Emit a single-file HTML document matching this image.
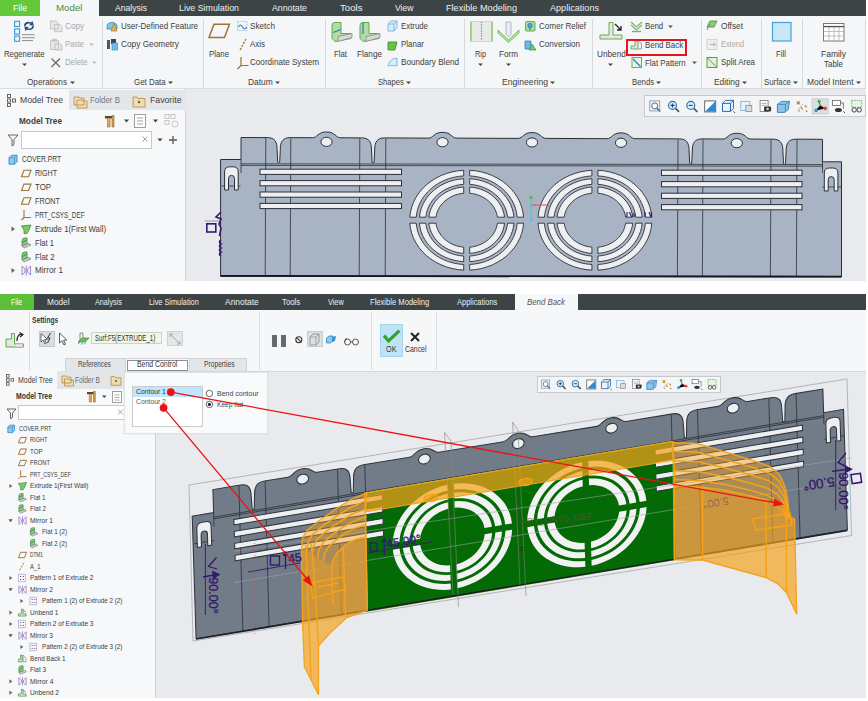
<!DOCTYPE html><html><head><meta charset="utf-8"><style>html,body{margin:0;padding:0;background:#fff;width:868px;height:701px;overflow:hidden;}body{position:relative;font-family:"Liberation Sans",sans-serif;}</style></head><body><div style="position:absolute;left:0px;top:0px;width:866px;height:16px;background:#3c4446;z-index:1;"></div>
<div style="position:absolute;left:0px;top:0px;width:40px;height:16px;background:#62c93b;z-index:2;"></div>
<div style="position:absolute;left:40px;top:0px;width:59px;height:16px;background:#f4f6f7;z-index:2;"></div>
<div style="position:absolute;left:13.00px;top:2.60px;height:10.80px;line-height:10.80px;font-size:9px;color:#ffffff;font-weight:normal;font-style:normal;white-space:pre;transform:scaleX(0.964);transform-origin:0 0;z-index:5">File</div>
<div style="position:absolute;left:56.00px;top:2.24px;height:11.52px;line-height:11.52px;font-size:9.6px;color:#4a8a46;font-weight:normal;font-style:normal;white-space:pre;transform:scaleX(1.014);transform-origin:0 0;z-index:5">Model</div>
<div style="position:absolute;left:115.00px;top:2.36px;height:11.28px;line-height:11.28px;font-size:9.4px;color:#eef0f0;font-weight:normal;font-style:normal;white-space:pre;transform:scaleX(0.916);transform-origin:0 0;z-index:5">Analysis</div>
<div style="position:absolute;left:179.00px;top:2.36px;height:11.28px;line-height:11.28px;font-size:9.4px;color:#eef0f0;font-weight:normal;font-style:normal;white-space:pre;transform:scaleX(0.944);transform-origin:0 0;z-index:5">Live Simulation</div>
<div style="position:absolute;left:272.00px;top:2.36px;height:11.28px;line-height:11.28px;font-size:9.4px;color:#eef0f0;font-weight:normal;font-style:normal;white-space:pre;transform:scaleX(0.932);transform-origin:0 0;z-index:5">Annotate</div>
<div style="position:absolute;left:340.00px;top:2.36px;height:11.28px;line-height:11.28px;font-size:9.4px;color:#eef0f0;font-weight:normal;font-style:normal;white-space:pre;transform:scaleX(1.028);transform-origin:0 0;z-index:5">Tools</div>
<div style="position:absolute;left:395.00px;top:2.36px;height:11.28px;line-height:11.28px;font-size:9.4px;color:#eef0f0;font-weight:normal;font-style:normal;white-space:pre;transform:scaleX(0.918);transform-origin:0 0;z-index:5">View</div>
<div style="position:absolute;left:446.00px;top:2.36px;height:11.28px;line-height:11.28px;font-size:9.4px;color:#eef0f0;font-weight:normal;font-style:normal;white-space:pre;transform:scaleX(0.973);transform-origin:0 0;z-index:5">Flexible Modeling</div>
<div style="position:absolute;left:550.00px;top:2.36px;height:11.28px;line-height:11.28px;font-size:9.4px;color:#eef0f0;font-weight:normal;font-style:normal;white-space:pre;transform:scaleX(0.969);transform-origin:0 0;z-index:5">Applications</div>
<div style="position:absolute;left:0px;top:16px;width:866px;height:73px;background:#f4f6f7;z-index:1;"></div>
<div style="position:absolute;left:0px;top:88px;width:866px;height:1px;background:#d9dde0;z-index:2;"></div>
<div style="position:absolute;left:102px;top:19px;width:1px;height:69px;background:#d6dadd;z-index:2;"></div>
<div style="position:absolute;left:203px;top:19px;width:1px;height:69px;background:#d6dadd;z-index:2;"></div>
<div style="position:absolute;left:324.5px;top:19px;width:1px;height:69px;background:#d6dadd;z-index:2;"></div>
<div style="position:absolute;left:464px;top:19px;width:1px;height:69px;background:#d6dadd;z-index:2;"></div>
<div style="position:absolute;left:591.5px;top:19px;width:1px;height:69px;background:#d6dadd;z-index:2;"></div>
<div style="position:absolute;left:701px;top:19px;width:1px;height:69px;background:#d6dadd;z-index:2;"></div>
<div style="position:absolute;left:761px;top:19px;width:1px;height:69px;background:#d6dadd;z-index:2;"></div>
<div style="position:absolute;left:802px;top:19px;width:1px;height:69px;background:#d6dadd;z-index:2;"></div>
<div style="position:absolute;left:865px;top:19px;width:1px;height:69px;background:#d6dadd;z-index:2;"></div>
<div style="position:absolute;left:4.40px;top:49.38px;height:10.44px;line-height:10.44px;font-size:8.7px;color:#3e3e3e;font-weight:normal;font-style:normal;white-space:pre;transform:scaleX(0.894);transform-origin:0 0;z-index:5">Regenerate</div>
<div style="position:absolute;left:64.60px;top:20.78px;height:10.44px;line-height:10.44px;font-size:8.7px;color:#a9a9a9;font-weight:normal;font-style:normal;white-space:pre;transform:scaleX(0.942);transform-origin:0 0;z-index:5">Copy</div>
<div style="position:absolute;left:65.00px;top:39.18px;height:10.44px;line-height:10.44px;font-size:8.7px;color:#a9a9a9;font-weight:normal;font-style:normal;white-space:pre;transform:scaleX(0.855);transform-origin:0 0;z-index:5">Paste</div>
<div style="position:absolute;left:65.00px;top:57.28px;height:10.44px;line-height:10.44px;font-size:8.7px;color:#a9a9a9;font-weight:normal;font-style:normal;white-space:pre;transform:scaleX(0.896);transform-origin:0 0;z-index:5">Delete</div>
<div style="position:absolute;left:27.20px;top:76.78px;height:10.44px;line-height:10.44px;font-size:8.7px;color:#3e3e3e;font-weight:normal;font-style:normal;white-space:pre;transform:scaleX(0.941);transform-origin:0 0;z-index:5">Operations</div>
<div style="position:absolute;left:121.00px;top:20.78px;height:10.44px;line-height:10.44px;font-size:8.7px;color:#3e3e3e;font-weight:normal;font-style:normal;white-space:pre;transform:scaleX(0.922);transform-origin:0 0;z-index:5">User-Defined Feature</div>
<div style="position:absolute;left:121.00px;top:39.28px;height:10.44px;line-height:10.44px;font-size:8.7px;color:#3e3e3e;font-weight:normal;font-style:normal;white-space:pre;transform:scaleX(0.953);transform-origin:0 0;z-index:5">Copy Geometry</div>
<div style="position:absolute;left:133.70px;top:76.78px;height:10.44px;line-height:10.44px;font-size:8.7px;color:#3e3e3e;font-weight:normal;font-style:normal;white-space:pre;transform:scaleX(0.911);transform-origin:0 0;z-index:5">Get Data</div>
<div style="position:absolute;left:209.00px;top:49.38px;height:10.44px;line-height:10.44px;font-size:8.7px;color:#3e3e3e;font-weight:normal;font-style:normal;white-space:pre;transform:scaleX(0.900);transform-origin:0 0;z-index:5">Plane</div>
<div style="position:absolute;left:250.00px;top:20.78px;height:10.44px;line-height:10.44px;font-size:8.7px;color:#3e3e3e;font-weight:normal;font-style:normal;white-space:pre;transform:scaleX(0.941);transform-origin:0 0;z-index:5">Sketch</div>
<div style="position:absolute;left:250.00px;top:39.28px;height:10.44px;line-height:10.44px;font-size:8.7px;color:#3e3e3e;font-weight:normal;font-style:normal;white-space:pre;transform:scaleX(0.913);transform-origin:0 0;z-index:5">Axis</div>
<div style="position:absolute;left:250.00px;top:57.28px;height:10.44px;line-height:10.44px;font-size:8.7px;color:#3e3e3e;font-weight:normal;font-style:normal;white-space:pre;transform:scaleX(0.934);transform-origin:0 0;z-index:5">Coordinate System</div>
<div style="position:absolute;left:248.30px;top:76.78px;height:10.44px;line-height:10.44px;font-size:8.7px;color:#3e3e3e;font-weight:normal;font-style:normal;white-space:pre;transform:scaleX(0.969);transform-origin:0 0;z-index:5">Datum</div>
<div style="position:absolute;left:334.00px;top:49.38px;height:10.44px;line-height:10.44px;font-size:8.7px;color:#3e3e3e;font-weight:normal;font-style:normal;white-space:pre;transform:scaleX(0.898);transform-origin:0 0;z-index:5">Flat</div>
<div style="position:absolute;left:357.00px;top:49.38px;height:10.44px;line-height:10.44px;font-size:8.7px;color:#3e3e3e;font-weight:normal;font-style:normal;white-space:pre;transform:scaleX(0.941);transform-origin:0 0;z-index:5">Flange</div>
<div style="position:absolute;left:401.00px;top:20.78px;height:10.44px;line-height:10.44px;font-size:8.7px;color:#3e3e3e;font-weight:normal;font-style:normal;white-space:pre;transform:scaleX(0.901);transform-origin:0 0;z-index:5">Extrude</div>
<div style="position:absolute;left:401.00px;top:39.28px;height:10.44px;line-height:10.44px;font-size:8.7px;color:#3e3e3e;font-weight:normal;font-style:normal;white-space:pre;transform:scaleX(0.915);transform-origin:0 0;z-index:5">Planar</div>
<div style="position:absolute;left:401.00px;top:57.28px;height:10.44px;line-height:10.44px;font-size:8.7px;color:#3e3e3e;font-weight:normal;font-style:normal;white-space:pre;transform:scaleX(0.938);transform-origin:0 0;z-index:5">Boundary Blend</div>
<div style="position:absolute;left:378.00px;top:76.78px;height:10.44px;line-height:10.44px;font-size:8.7px;color:#3e3e3e;font-weight:normal;font-style:normal;white-space:pre;transform:scaleX(0.876);transform-origin:0 0;z-index:5">Shapes</div>
<div style="position:absolute;left:475.00px;top:49.38px;height:10.44px;line-height:10.44px;font-size:8.7px;color:#3e3e3e;font-weight:normal;font-style:normal;white-space:pre;transform:scaleX(0.843);transform-origin:0 0;z-index:5">Rip</div>
<div style="position:absolute;left:499.00px;top:49.38px;height:10.44px;line-height:10.44px;font-size:8.7px;color:#3e3e3e;font-weight:normal;font-style:normal;white-space:pre;transform:scaleX(0.937);transform-origin:0 0;z-index:5">Form</div>
<div style="position:absolute;left:539.00px;top:20.78px;height:10.44px;line-height:10.44px;font-size:8.7px;color:#3e3e3e;font-weight:normal;font-style:normal;white-space:pre;transform:scaleX(0.918);transform-origin:0 0;z-index:5">Corner Relief</div>
<div style="position:absolute;left:539.00px;top:39.28px;height:10.44px;line-height:10.44px;font-size:8.7px;color:#3e3e3e;font-weight:normal;font-style:normal;white-space:pre;transform:scaleX(0.933);transform-origin:0 0;z-index:5">Conversion</div>
<div style="position:absolute;left:501.50px;top:76.78px;height:10.44px;line-height:10.44px;font-size:8.7px;color:#3e3e3e;font-weight:normal;font-style:normal;white-space:pre;transform:scaleX(0.992);transform-origin:0 0;z-index:5">Engineering</div>
<div style="position:absolute;left:596.60px;top:49.38px;height:10.44px;line-height:10.44px;font-size:8.7px;color:#3e3e3e;font-weight:normal;font-style:normal;white-space:pre;transform:scaleX(0.949);transform-origin:0 0;z-index:5">Unbend</div>
<div style="position:absolute;left:645.10px;top:20.78px;height:10.44px;line-height:10.44px;font-size:8.7px;color:#3e3e3e;font-weight:normal;font-style:normal;white-space:pre;transform:scaleX(0.897);transform-origin:0 0;z-index:5">Bend</div>
<div style="position:absolute;left:645.10px;top:39.78px;height:10.44px;line-height:10.44px;font-size:8.7px;color:#3e3e3e;font-weight:normal;font-style:normal;white-space:pre;transform:scaleX(0.906);transform-origin:0 0;z-index:5">Bend Back</div>
<div style="position:absolute;left:645.10px;top:57.58px;height:10.44px;line-height:10.44px;font-size:8.7px;color:#3e3e3e;font-weight:normal;font-style:normal;white-space:pre;transform:scaleX(0.904);transform-origin:0 0;z-index:5">Flat Pattern</div>
<div style="position:absolute;left:631.80px;top:76.78px;height:10.44px;line-height:10.44px;font-size:8.7px;color:#3e3e3e;font-weight:normal;font-style:normal;white-space:pre;transform:scaleX(0.901);transform-origin:0 0;z-index:5">Bends</div>
<div style="position:absolute;left:721.00px;top:20.78px;height:10.44px;line-height:10.44px;font-size:8.7px;color:#3e3e3e;font-weight:normal;font-style:normal;white-space:pre;transform:scaleX(0.955);transform-origin:0 0;z-index:5">Offset</div>
<div style="position:absolute;left:721.00px;top:39.28px;height:10.44px;line-height:10.44px;font-size:8.7px;color:#a9a9a9;font-weight:normal;font-style:normal;white-space:pre;transform:scaleX(0.850);transform-origin:0 0;z-index:5">Extend</div>
<div style="position:absolute;left:721.00px;top:57.28px;height:10.44px;line-height:10.44px;font-size:8.7px;color:#3e3e3e;font-weight:normal;font-style:normal;white-space:pre;transform:scaleX(0.914);transform-origin:0 0;z-index:5">Split Area</div>
<div style="position:absolute;left:714.20px;top:76.78px;height:10.44px;line-height:10.44px;font-size:8.7px;color:#3e3e3e;font-weight:normal;font-style:normal;white-space:pre;transform:scaleX(0.963);transform-origin:0 0;z-index:5">Editing</div>
<div style="position:absolute;left:776.00px;top:49.38px;height:10.44px;line-height:10.44px;font-size:8.7px;color:#3e3e3e;font-weight:normal;font-style:normal;white-space:pre;transform:scaleX(0.900);transform-origin:0 0;z-index:5">Fill</div>
<div style="position:absolute;left:764.20px;top:76.78px;height:10.44px;line-height:10.44px;font-size:8.7px;color:#3e3e3e;font-weight:normal;font-style:normal;white-space:pre;transform:scaleX(0.898);transform-origin:0 0;z-index:5">Surface</div>
<div style="position:absolute;left:821.00px;top:49.38px;height:10.44px;line-height:10.44px;font-size:8.7px;color:#3e3e3e;font-weight:normal;font-style:normal;white-space:pre;transform:scaleX(0.977);transform-origin:0 0;z-index:5">Family</div>
<div style="position:absolute;left:824.00px;top:59.28px;height:10.44px;line-height:10.44px;font-size:8.7px;color:#3e3e3e;font-weight:normal;font-style:normal;white-space:pre;transform:scaleX(0.914);transform-origin:0 0;z-index:5">Table</div>
<div style="position:absolute;left:806.50px;top:76.78px;height:10.44px;line-height:10.44px;font-size:8.7px;color:#3e3e3e;font-weight:normal;font-style:normal;white-space:pre;transform:scaleX(0.973);transform-origin:0 0;z-index:5">Model Intent</div>
<svg style="position:absolute;left:22.2px;top:61.5px;z-index:4;overflow:visible;" width="5.0" height="5.0" viewBox="0 0 5.0 5.0"><path d="M0 1.5 L5.0 1.5 L2.5 4.0 Z" fill="#444"/></svg>
<svg style="position:absolute;left:88.5px;top:41.9px;z-index:4;overflow:visible;" width="5.0" height="5.0" viewBox="0 0 5.0 5.0"><path d="M0 1.5 L5.0 1.5 L2.5 4.0 Z" fill="#bbb"/></svg>
<svg style="position:absolute;left:91.9px;top:60.0px;z-index:4;overflow:visible;" width="5.0" height="5.0" viewBox="0 0 5.0 5.0"><path d="M0 1.5 L5.0 1.5 L2.5 4.0 Z" fill="#bbb"/></svg>
<svg style="position:absolute;left:69.5px;top:79.5px;z-index:4;overflow:visible;" width="5.0" height="5.0" viewBox="0 0 5.0 5.0"><path d="M0 1.5 L5.0 1.5 L2.5 4.0 Z" fill="#444"/></svg>
<svg style="position:absolute;left:167.5px;top:79.5px;z-index:4;overflow:visible;" width="5.0" height="5.0" viewBox="0 0 5.0 5.0"><path d="M0 1.5 L5.0 1.5 L2.5 4.0 Z" fill="#444"/></svg>
<svg style="position:absolute;left:274.5px;top:79.5px;z-index:4;overflow:visible;" width="5.0" height="5.0" viewBox="0 0 5.0 5.0"><path d="M0 1.5 L5.0 1.5 L2.5 4.0 Z" fill="#444"/></svg>
<svg style="position:absolute;left:405.5px;top:79.5px;z-index:4;overflow:visible;" width="5.0" height="5.0" viewBox="0 0 5.0 5.0"><path d="M0 1.5 L5.0 1.5 L2.5 4.0 Z" fill="#444"/></svg>
<svg style="position:absolute;left:478.0px;top:61.5px;z-index:4;overflow:visible;" width="5.0" height="5.0" viewBox="0 0 5.0 5.0"><path d="M0 1.5 L5.0 1.5 L2.5 4.0 Z" fill="#444"/></svg>
<svg style="position:absolute;left:506.0px;top:61.5px;z-index:4;overflow:visible;" width="5.0" height="5.0" viewBox="0 0 5.0 5.0"><path d="M0 1.5 L5.0 1.5 L2.5 4.0 Z" fill="#444"/></svg>
<svg style="position:absolute;left:549.5px;top:79.5px;z-index:4;overflow:visible;" width="5.0" height="5.0" viewBox="0 0 5.0 5.0"><path d="M0 1.5 L5.0 1.5 L2.5 4.0 Z" fill="#444"/></svg>
<svg style="position:absolute;left:608.0px;top:61.5px;z-index:4;overflow:visible;" width="5.0" height="5.0" viewBox="0 0 5.0 5.0"><path d="M0 1.5 L5.0 1.5 L2.5 4.0 Z" fill="#444"/></svg>
<svg style="position:absolute;left:668.4px;top:23.5px;z-index:4;overflow:visible;" width="5.0" height="5.0" viewBox="0 0 5.0 5.0"><path d="M0 1.5 L5.0 1.5 L2.5 4.0 Z" fill="#555"/></svg>
<svg style="position:absolute;left:691.5px;top:60.3px;z-index:4;overflow:visible;" width="5.0" height="5.0" viewBox="0 0 5.0 5.0"><path d="M0 1.5 L5.0 1.5 L2.5 4.0 Z" fill="#555"/></svg>
<svg style="position:absolute;left:655.9px;top:79.5px;z-index:4;overflow:visible;" width="5.0" height="5.0" viewBox="0 0 5.0 5.0"><path d="M0 1.5 L5.0 1.5 L2.5 4.0 Z" fill="#444"/></svg>
<svg style="position:absolute;left:741.5px;top:79.5px;z-index:4;overflow:visible;" width="5.0" height="5.0" viewBox="0 0 5.0 5.0"><path d="M0 1.5 L5.0 1.5 L2.5 4.0 Z" fill="#444"/></svg>
<svg style="position:absolute;left:792.5px;top:79.5px;z-index:4;overflow:visible;" width="5.0" height="5.0" viewBox="0 0 5.0 5.0"><path d="M0 1.5 L5.0 1.5 L2.5 4.0 Z" fill="#444"/></svg>
<svg style="position:absolute;left:855.5px;top:79.5px;z-index:4;overflow:visible;" width="5.0" height="5.0" viewBox="0 0 5.0 5.0"><path d="M0 1.5 L5.0 1.5 L2.5 4.0 Z" fill="#444"/></svg>
<div style="position:absolute;left:626px;top:39px;width:61px;height:17px;background:transparent;z-index:6;box-sizing:border-box;border:2px solid #e8141c;"></div>
<div style="position:absolute;left:0px;top:89px;width:866px;height:192px;background:#e9eaed;z-index:1;"></div>
<div style="position:absolute;left:0px;top:89px;width:186px;height:192px;background:#f6f8f9;z-index:2;"></div>
<div style="position:absolute;left:185px;top:89px;width:1px;height:192px;background:#d0d5d8;z-index:2;"></div>
<div style="position:absolute;left:0px;top:90px;width:186px;height:20px;background:#e4e7ea;z-index:2;"></div>
<div style="position:absolute;left:0px;top:90px;width:69px;height:20px;background:#f6f8f9;z-index:3;"></div>
<div style="position:absolute;left:19.50px;top:95.28px;height:10.44px;line-height:10.44px;font-size:8.7px;color:#3e3e3e;font-weight:normal;font-style:normal;white-space:pre;transform:scaleX(0.989);transform-origin:0 0;z-index:5">Model Tree</div>
<div style="position:absolute;left:90.00px;top:95.28px;height:10.44px;line-height:10.44px;font-size:8.7px;color:#777;font-weight:normal;font-style:normal;white-space:pre;transform:scaleX(0.913);transform-origin:0 0;z-index:5">Folder B</div>
<div style="position:absolute;left:149.50px;top:95.28px;height:10.44px;line-height:10.44px;font-size:8.7px;color:#3e3e3e;font-weight:normal;font-style:normal;white-space:pre;transform:scaleX(1.003);transform-origin:0 0;z-index:5">Favorite</div>
<div style="position:absolute;left:19.00px;top:115.78px;height:10.44px;line-height:10.44px;font-size:8.7px;color:#3e3e3e;font-weight:bold;font-style:normal;white-space:pre;transform:scaleX(0.947);transform-origin:0 0;z-index:5">Model Tree</div>
<div style="position:absolute;left:21px;top:131px;width:131px;height:18px;background:#ffffff;z-index:3;box-sizing:border-box;border:1px solid #c5cacd;"></div>
<div style="position:absolute;left:22.00px;top:154.48px;height:10.44px;line-height:10.44px;font-size:8.7px;color:#3e3e3e;font-weight:normal;font-style:normal;white-space:pre;transform:scaleX(0.772);transform-origin:0 0;z-index:5">COVER.PRT</div>
<div style="position:absolute;left:35.00px;top:168.28px;height:10.44px;line-height:10.44px;font-size:8.7px;color:#3e3e3e;font-weight:normal;font-style:normal;white-space:pre;transform:scaleX(0.814);transform-origin:0 0;z-index:5">RIGHT</div>
<div style="position:absolute;left:35.00px;top:182.08px;height:10.44px;line-height:10.44px;font-size:8.7px;color:#3e3e3e;font-weight:normal;font-style:normal;white-space:pre;transform:scaleX(0.904);transform-origin:0 0;z-index:5">TOP</div>
<div style="position:absolute;left:35.00px;top:195.78px;height:10.44px;line-height:10.44px;font-size:8.7px;color:#3e3e3e;font-weight:normal;font-style:normal;white-space:pre;transform:scaleX(0.836);transform-origin:0 0;z-index:5">FRONT</div>
<div style="position:absolute;left:35.00px;top:209.78px;height:10.44px;line-height:10.44px;font-size:8.7px;color:#3e3e3e;font-weight:normal;font-style:normal;white-space:pre;transform:scaleX(0.729);transform-origin:0 0;z-index:5">PRT_CSYS_DEF</div>
<div style="position:absolute;left:35.00px;top:223.78px;height:10.44px;line-height:10.44px;font-size:8.7px;color:#3e3e3e;font-weight:normal;font-style:normal;white-space:pre;transform:scaleX(0.901);transform-origin:0 0;z-index:5">Extrude 1(First Wall)</div>
<div style="position:absolute;left:35.00px;top:237.78px;height:10.44px;line-height:10.44px;font-size:8.7px;color:#3e3e3e;font-weight:normal;font-style:normal;white-space:pre;transform:scaleX(0.874);transform-origin:0 0;z-index:5">Flat 1</div>
<div style="position:absolute;left:35.00px;top:251.78px;height:10.44px;line-height:10.44px;font-size:8.7px;color:#3e3e3e;font-weight:normal;font-style:normal;white-space:pre;transform:scaleX(0.897);transform-origin:0 0;z-index:5">Flat 2</div>
<div style="position:absolute;left:35.00px;top:265.38px;height:10.44px;line-height:10.44px;font-size:8.7px;color:#3e3e3e;font-weight:normal;font-style:normal;white-space:pre;transform:scaleX(0.935);transform-origin:0 0;z-index:5">Mirror 1</div>
<svg style="position:absolute;left:0px;top:0px;z-index:4;overflow:visible;" width="868" height="701" viewBox="0 0 868 701"><defs>
<g id="mdlbody"><path d="M220.6 276.3 L220.6 159.5 L241 159.5 L241 137.5 L267.2 137.62 C274.7 137.62 277.1 141.62 277.1 149.62 L277.7 162.12 Q278.7 163.12 279.7 162.12 L280.3 149.62 C280.3 141.62 282.7 137.62 290.2 137.62 L312.5 137.76 C317.5 137.76 317.5 131.95999999999998 326.5 131.95999999999998 C335.5 131.95999999999998 335.5 137.76 340.5 137.76 L361.6 137.91 C369.1 137.91 371.5 141.91 371.5 149.91 L372.1 162.41 Q373.1 163.41 374.1 162.41 L374.7 149.91 C374.7 141.91 377.1 137.91 384.6 137.91 L428.5 138.12 C433.5 138.12 433.5 132.32 442.5 132.32 C451.5 132.32 451.5 138.12 456.5 138.12 L518.0 138.4 C523.0 138.4 523.0 132.6 532.0 132.6 C541.0 132.6 541.0 138.4 546.0 138.4 L607.0 138.68 C612.0 138.68 612.0 132.88 621.0 132.88 C630.0 132.88 630.0 138.68 635.0 138.68 L679.2 138.89 C686.7 138.89 689.1 142.89 689.1 150.89 L689.7 163.39 Q690.7 164.39 691.7 163.39 L692.3 150.89 C692.3 142.89 694.7 138.89 702.2 138.89 L722.8 139.04 C727.8 139.04 727.8 133.23999999999998 736.8 133.23999999999998 C745.8 133.23999999999998 745.8 139.04 750.8 139.04 L773.0 139.18 C780.5 139.18 782.9 143.18 782.9 151.18 L783.5 163.68 Q784.5 164.68 785.5 163.68 L786.1 151.18 C786.1 143.18 788.5 139.18 796.0 139.18 L822.5 139.3 L822.5 161.8 L841.5 161.8 L841.5 276.8 Z" fill="var(--mf)" stroke="var(--ms)" stroke-width="1"/></g>
<g id="mdllines" fill="none" stroke="var(--ms)" stroke-width="0.8"><path d="M265.8 138.1 L265.2 276.5"/><path d="M290.8 138.2 L290.2 276.5"/><path d="M359.8 138.4 L359.2 276.5"/><path d="M385.8 138.4 L385.2 276.5"/><path d="M678 139.4 L677.4 276.5"/><path d="M703 139.4 L702.4 276.5"/><path d="M771 139.6 L770.4 276.5"/><path d="M797 139.7 L796.4 276.5"/><path d="M241 163.8 L822.5 164.6 M241 165.4 L822.5 166.2 M241 159.5 L241 173 M822.5 161.8 L822.5 173 M221.5 186 H240.5 M822.5 187 H841"/></g>
<g id="mdlholes" fill="var(--sf)" stroke="var(--ms)" stroke-width="1"><ellipse cx="326.5" cy="141.86" rx="5.6" ry="4.6"/><ellipse cx="442.5" cy="142.22" rx="5.6" ry="4.6"/><ellipse cx="532" cy="142.50" rx="5.6" ry="4.6"/><ellipse cx="621" cy="142.78" rx="5.6" ry="4.6"/><ellipse cx="736.8" cy="143.14" rx="5.6" ry="4.6"/><rect x="260" y="169.20" width="141.5" height="5.2" /><rect x="260" y="180.60" width="141.5" height="5.2" /><rect x="260" y="192.00" width="141.5" height="5.2" /><rect x="260" y="203.40" width="141.5" height="5.2" /><rect x="661.5" y="170.20" width="140.5" height="5.2" /><rect x="661.5" y="181.60" width="140.5" height="5.2" /><rect x="661.5" y="193.20" width="140.5" height="5.2" /><rect x="661.5" y="204.60" width="140.5" height="5.2" /><path d="M224.6 190 L224.6 171.8 Q224.6 166.8 229.6 166.8 L233.2 166.8 Q238.2 166.8 238.2 171.8 L238.2 190 L234.5 190 L234.5 178.4 A3.0 3.0 0 0 0 228.5 178.4 L228.5 190 Z"/><path d="M824.3 191 L824.3 173 Q824.3 168 829.3 168 L832.9 168 Q837.9 168 837.9 173 L837.9 191 L834.2 191 L834.2 179.6 A3.0 3.0 0 0 0 828.2 179.6 L828.2 191 Z"/></g>
<g id="mdlrings"><path d="M409.80 217.20 L410.47 212.03 L411.74 206.95 L413.61 202.01 L416.05 197.26 L419.05 192.77 L422.56 188.58 L426.54 184.72 L430.97 181.25 L435.78 178.21 L440.92 175.61 L446.35 173.51 L451.99 171.90 L457.80 170.82 L463.70 170.28 L463.70 175.90 L458.52 176.41 L453.42 177.38 L448.46 178.81 L443.70 180.67 L439.18 182.96 L434.96 185.64 L431.07 188.69 L427.56 192.08 L424.47 195.76 L421.82 199.70 L419.65 203.86 L417.99 208.20 L416.84 212.66 L416.22 217.20ZM409.80 223.20 L410.47 228.37 L411.74 233.45 L413.61 238.39 L416.05 243.14 L419.05 247.63 L422.56 251.82 L426.54 255.68 L430.97 259.15 L435.78 262.19 L440.92 264.79 L446.35 266.89 L451.99 268.50 L457.80 269.58 L463.70 270.12 L463.70 264.50 L458.52 263.99 L453.42 263.02 L448.46 261.59 L443.70 259.73 L439.18 257.44 L434.96 254.76 L431.07 251.71 L427.56 248.32 L424.47 244.64 L421.82 240.70 L419.65 236.54 L417.99 232.20 L416.84 227.74 L416.22 223.20ZM523.60 217.20 L522.93 212.03 L521.66 206.95 L519.79 202.01 L517.35 197.26 L514.35 192.77 L510.84 188.58 L506.86 184.72 L502.43 181.25 L497.62 178.21 L492.48 175.61 L487.05 173.51 L481.41 171.90 L475.60 170.82 L469.70 170.28 L469.70 175.90 L474.88 176.41 L479.98 177.38 L484.94 178.81 L489.70 180.67 L494.22 182.96 L498.44 185.64 L502.33 188.69 L505.84 192.08 L508.93 195.76 L511.58 199.70 L513.75 203.86 L515.41 208.20 L516.56 212.66 L517.18 217.20ZM523.60 223.20 L522.93 228.37 L521.66 233.45 L519.79 238.39 L517.35 243.14 L514.35 247.63 L510.84 251.82 L506.86 255.68 L502.43 259.15 L497.62 262.19 L492.48 264.79 L487.05 266.89 L481.41 268.50 L475.60 269.58 L469.70 270.12 L469.70 264.50 L474.88 263.99 L479.98 263.02 L484.94 261.59 L489.70 259.73 L494.22 257.44 L498.44 254.76 L502.33 251.71 L505.84 248.32 L508.93 244.64 L511.58 240.70 L513.75 236.54 L515.41 232.20 L516.56 227.74 L517.18 223.20ZM419.42 217.20 L420.02 212.97 L421.11 208.82 L422.68 204.79 L424.71 200.92 L427.18 197.25 L430.06 193.82 L433.33 190.68 L436.95 187.84 L440.89 185.34 L445.09 183.20 L449.52 181.46 L454.13 180.12 L458.87 179.20 L463.70 178.71 L463.70 184.34 L459.59 184.79 L455.56 185.60 L451.64 186.76 L447.87 188.26 L444.29 190.09 L440.94 192.22 L437.86 194.64 L435.07 197.32 L432.60 200.24 L430.48 203.36 L428.72 206.64 L427.36 210.07 L426.40 213.60 L425.84 217.20ZM419.42 223.20 L420.02 227.43 L421.11 231.58 L422.68 235.61 L424.71 239.48 L427.18 243.15 L430.06 246.58 L433.33 249.72 L436.95 252.56 L440.89 255.06 L445.09 257.20 L449.52 258.94 L454.13 260.28 L458.87 261.20 L463.70 261.69 L463.70 256.06 L459.59 255.61 L455.56 254.80 L451.64 253.64 L447.87 252.14 L444.29 250.31 L440.94 248.18 L437.86 245.76 L435.07 243.08 L432.60 240.16 L430.48 237.04 L428.72 233.76 L427.36 230.33 L426.40 226.80 L425.84 223.20ZM513.98 217.20 L513.38 212.97 L512.29 208.82 L510.72 204.79 L508.69 200.92 L506.22 197.25 L503.34 193.82 L500.07 190.68 L496.45 187.84 L492.51 185.34 L488.31 183.20 L483.88 181.46 L479.27 180.12 L474.53 179.20 L469.70 178.71 L469.70 184.34 L473.81 184.79 L477.84 185.60 L481.76 186.76 L485.53 188.26 L489.11 190.09 L492.46 192.22 L495.54 194.64 L498.33 197.32 L500.80 200.24 L502.92 203.36 L504.68 206.64 L506.04 210.07 L507.00 213.60 L507.56 217.20ZM513.98 223.20 L513.38 227.43 L512.29 231.58 L510.72 235.61 L508.69 239.48 L506.22 243.15 L503.34 246.58 L500.07 249.72 L496.45 252.56 L492.51 255.06 L488.31 257.20 L483.88 258.94 L479.27 260.28 L474.53 261.20 L469.70 261.69 L469.70 256.06 L473.81 255.61 L477.84 254.80 L481.76 253.64 L485.53 252.14 L489.11 250.31 L492.46 248.18 L495.54 245.76 L498.33 243.08 L500.80 240.16 L502.92 237.04 L504.68 233.76 L506.04 230.33 L507.00 226.80 L507.56 223.20ZM428.85 217.20 L429.39 213.90 L430.29 210.66 L431.56 207.51 L433.18 204.50 L435.14 201.64 L437.41 198.97 L439.98 196.50 L442.81 194.28 L445.89 192.32 L449.17 190.63 L452.63 189.24 L456.23 188.17 L459.93 187.41 L463.70 186.98 L463.70 193.23 L460.73 193.61 L457.81 194.25 L454.97 195.13 L452.25 196.25 L449.67 197.59 L447.24 199.15 L445.00 200.91 L442.97 202.85 L441.16 204.95 L439.59 207.20 L438.27 209.57 L437.23 212.05 L436.47 214.60 L435.99 217.20ZM428.85 223.20 L429.39 226.50 L430.29 229.74 L431.56 232.89 L433.18 235.90 L435.14 238.76 L437.41 241.43 L439.98 243.90 L442.81 246.12 L445.89 248.08 L449.17 249.77 L452.63 251.16 L456.23 252.23 L459.93 252.99 L463.70 253.42 L463.70 247.17 L460.73 246.79 L457.81 246.15 L454.97 245.27 L452.25 244.15 L449.67 242.81 L447.24 241.25 L445.00 239.49 L442.97 237.55 L441.16 235.45 L439.59 233.20 L438.27 230.83 L437.23 228.35 L436.47 225.80 L435.99 223.20ZM504.55 217.20 L504.01 213.90 L503.11 210.66 L501.84 207.51 L500.22 204.50 L498.26 201.64 L495.99 198.97 L493.42 196.50 L490.59 194.28 L487.51 192.32 L484.23 190.63 L480.77 189.24 L477.17 188.17 L473.47 187.41 L469.70 186.98 L469.70 193.23 L472.67 193.61 L475.59 194.25 L478.43 195.13 L481.15 196.25 L483.73 197.59 L486.16 199.15 L488.40 200.91 L490.43 202.85 L492.24 204.95 L493.81 207.20 L495.13 209.57 L496.17 212.05 L496.93 214.60 L497.41 217.20ZM504.55 223.20 L504.01 226.50 L503.11 229.74 L501.84 232.89 L500.22 235.90 L498.26 238.76 L495.99 241.43 L493.42 243.90 L490.59 246.12 L487.51 248.08 L484.23 249.77 L480.77 251.16 L477.17 252.23 L473.47 252.99 L469.70 253.42 L469.70 247.17 L472.67 246.79 L475.59 246.15 L478.43 245.27 L481.15 244.15 L483.73 242.81 L486.16 241.25 L488.40 239.49 L490.43 237.55 L492.24 235.45 L493.81 233.20 L495.13 230.83 L496.17 228.35 L496.93 225.80 L497.41 223.20ZM538.00 217.20 L538.67 212.03 L539.94 206.95 L541.81 202.01 L544.25 197.26 L547.25 192.77 L550.76 188.58 L554.74 184.72 L559.17 181.25 L563.98 178.21 L569.12 175.61 L574.55 173.51 L580.19 171.90 L586.00 170.82 L591.90 170.28 L591.90 175.90 L586.72 176.41 L581.62 177.38 L576.66 178.81 L571.90 180.67 L567.38 182.96 L563.16 185.64 L559.27 188.69 L555.76 192.08 L552.67 195.76 L550.02 199.70 L547.85 203.86 L546.19 208.20 L545.04 212.66 L544.42 217.20ZM538.00 223.20 L538.67 228.37 L539.94 233.45 L541.81 238.39 L544.25 243.14 L547.25 247.63 L550.76 251.82 L554.74 255.68 L559.17 259.15 L563.98 262.19 L569.12 264.79 L574.55 266.89 L580.19 268.50 L586.00 269.58 L591.90 270.12 L591.90 264.50 L586.72 263.99 L581.62 263.02 L576.66 261.59 L571.90 259.73 L567.38 257.44 L563.16 254.76 L559.27 251.71 L555.76 248.32 L552.67 244.64 L550.02 240.70 L547.85 236.54 L546.19 232.20 L545.04 227.74 L544.42 223.20ZM651.80 217.20 L651.13 212.03 L649.86 206.95 L647.99 202.01 L645.55 197.26 L642.55 192.77 L639.04 188.58 L635.06 184.72 L630.63 181.25 L625.82 178.21 L620.68 175.61 L615.25 173.51 L609.61 171.90 L603.80 170.82 L597.90 170.28 L597.90 175.90 L603.08 176.41 L608.18 177.38 L613.14 178.81 L617.90 180.67 L622.42 182.96 L626.64 185.64 L630.53 188.69 L634.04 192.08 L637.13 195.76 L639.78 199.70 L641.95 203.86 L643.61 208.20 L644.76 212.66 L645.38 217.20ZM651.80 223.20 L651.13 228.37 L649.86 233.45 L647.99 238.39 L645.55 243.14 L642.55 247.63 L639.04 251.82 L635.06 255.68 L630.63 259.15 L625.82 262.19 L620.68 264.79 L615.25 266.89 L609.61 268.50 L603.80 269.58 L597.90 270.12 L597.90 264.50 L603.08 263.99 L608.18 263.02 L613.14 261.59 L617.90 259.73 L622.42 257.44 L626.64 254.76 L630.53 251.71 L634.04 248.32 L637.13 244.64 L639.78 240.70 L641.95 236.54 L643.61 232.20 L644.76 227.74 L645.38 223.20ZM547.62 217.20 L548.22 212.97 L549.31 208.82 L550.88 204.79 L552.91 200.92 L555.38 197.25 L558.26 193.82 L561.53 190.68 L565.15 187.84 L569.09 185.34 L573.29 183.20 L577.72 181.46 L582.33 180.12 L587.07 179.20 L591.90 178.71 L591.90 184.34 L587.79 184.79 L583.76 185.60 L579.84 186.76 L576.07 188.26 L572.49 190.09 L569.14 192.22 L566.06 194.64 L563.27 197.32 L560.80 200.24 L558.68 203.36 L556.92 206.64 L555.56 210.07 L554.60 213.60 L554.04 217.20ZM547.62 223.20 L548.22 227.43 L549.31 231.58 L550.88 235.61 L552.91 239.48 L555.38 243.15 L558.26 246.58 L561.53 249.72 L565.15 252.56 L569.09 255.06 L573.29 257.20 L577.72 258.94 L582.33 260.28 L587.07 261.20 L591.90 261.69 L591.90 256.06 L587.79 255.61 L583.76 254.80 L579.84 253.64 L576.07 252.14 L572.49 250.31 L569.14 248.18 L566.06 245.76 L563.27 243.08 L560.80 240.16 L558.68 237.04 L556.92 233.76 L555.56 230.33 L554.60 226.80 L554.04 223.20ZM642.18 217.20 L641.58 212.97 L640.49 208.82 L638.92 204.79 L636.89 200.92 L634.42 197.25 L631.54 193.82 L628.27 190.68 L624.65 187.84 L620.71 185.34 L616.51 183.20 L612.08 181.46 L607.47 180.12 L602.73 179.20 L597.90 178.71 L597.90 184.34 L602.01 184.79 L606.04 185.60 L609.96 186.76 L613.73 188.26 L617.31 190.09 L620.66 192.22 L623.74 194.64 L626.53 197.32 L629.00 200.24 L631.12 203.36 L632.88 206.64 L634.24 210.07 L635.20 213.60 L635.76 217.20ZM642.18 223.20 L641.58 227.43 L640.49 231.58 L638.92 235.61 L636.89 239.48 L634.42 243.15 L631.54 246.58 L628.27 249.72 L624.65 252.56 L620.71 255.06 L616.51 257.20 L612.08 258.94 L607.47 260.28 L602.73 261.20 L597.90 261.69 L597.90 256.06 L602.01 255.61 L606.04 254.80 L609.96 253.64 L613.73 252.14 L617.31 250.31 L620.66 248.18 L623.74 245.76 L626.53 243.08 L629.00 240.16 L631.12 237.04 L632.88 233.76 L634.24 230.33 L635.20 226.80 L635.76 223.20ZM557.05 217.20 L557.59 213.90 L558.49 210.66 L559.76 207.51 L561.38 204.50 L563.34 201.64 L565.61 198.97 L568.18 196.50 L571.01 194.28 L574.09 192.32 L577.37 190.63 L580.83 189.24 L584.43 188.17 L588.13 187.41 L591.90 186.98 L591.90 193.23 L588.93 193.61 L586.01 194.25 L583.17 195.13 L580.45 196.25 L577.87 197.59 L575.44 199.15 L573.20 200.91 L571.17 202.85 L569.36 204.95 L567.79 207.20 L566.47 209.57 L565.43 212.05 L564.67 214.60 L564.19 217.20ZM557.05 223.20 L557.59 226.50 L558.49 229.74 L559.76 232.89 L561.38 235.90 L563.34 238.76 L565.61 241.43 L568.18 243.90 L571.01 246.12 L574.09 248.08 L577.37 249.77 L580.83 251.16 L584.43 252.23 L588.13 252.99 L591.90 253.42 L591.90 247.17 L588.93 246.79 L586.01 246.15 L583.17 245.27 L580.45 244.15 L577.87 242.81 L575.44 241.25 L573.20 239.49 L571.17 237.55 L569.36 235.45 L567.79 233.20 L566.47 230.83 L565.43 228.35 L564.67 225.80 L564.19 223.20ZM632.75 217.20 L632.21 213.90 L631.31 210.66 L630.04 207.51 L628.42 204.50 L626.46 201.64 L624.19 198.97 L621.62 196.50 L618.79 194.28 L615.71 192.32 L612.43 190.63 L608.97 189.24 L605.37 188.17 L601.67 187.41 L597.90 186.98 L597.90 193.23 L600.87 193.61 L603.79 194.25 L606.63 195.13 L609.35 196.25 L611.93 197.59 L614.36 199.15 L616.60 200.91 L618.63 202.85 L620.44 204.95 L622.01 207.20 L623.33 209.57 L624.37 212.05 L625.13 214.60 L625.61 217.20ZM632.75 223.20 L632.21 226.50 L631.31 229.74 L630.04 232.89 L628.42 235.90 L626.46 238.76 L624.19 241.43 L621.62 243.90 L618.79 246.12 L615.71 248.08 L612.43 249.77 L608.97 251.16 L605.37 252.23 L601.67 252.99 L597.90 253.42 L597.90 247.17 L600.87 246.79 L603.79 246.15 L606.63 245.27 L609.35 244.15 L611.93 242.81 L614.36 241.25 L616.60 239.49 L618.63 237.55 L620.44 235.45 L622.01 233.20 L623.33 230.83 L624.37 228.35 L625.13 225.80 L625.61 223.20Z" fill="var(--rf)" stroke="var(--ms)" stroke-width="0.9"/></g>
<clipPath id="gfx1"><rect x="186" y="89" width="680" height="192"/></clipPath></defs>
<g clip-path="url(#gfx1)" style="--mf:#a8b3c3;--ms:#2b3038;--sf:#eeeff1;--rf:#eeeff1;--bg:#e9eaed">
<use href="#mdlbody"/><use href="#mdllines"/><use href="#mdlholes"/><use href="#mdlrings"/>
<path d="M220.6 275.9 L841.5 276.6" stroke="#15181c" stroke-width="1.8"/>
<path d="M531 198 L531 219.5" stroke="#45c8e0" stroke-width="1"/><path d="M531 205 L549 205" stroke="#e05050" stroke-width="1"/>
<circle cx="531" cy="197.5" r="1.6" fill="#40c040"/><circle cx="531" cy="219.5" r="1.5" fill="#45c8e0"/>
</g></svg>
<div style="position:absolute;left:0px;top:294px;width:866px;height:16px;background:#3c4446;z-index:1;"></div>
<div style="position:absolute;left:0px;top:294px;width:34px;height:16px;background:#5cbf3a;z-index:2;"></div>
<div style="position:absolute;left:515px;top:294px;width:62.5px;height:16px;background:#f5f7f8;z-index:2;"></div>
<div style="position:absolute;left:11.40px;top:296.84px;height:10.32px;line-height:10.32px;font-size:8.6px;color:#ffffff;font-weight:normal;font-style:normal;white-space:pre;transform:scaleX(0.801);transform-origin:0 0;z-index:5">File</div>
<div style="position:absolute;left:47.00px;top:296.84px;height:10.32px;line-height:10.32px;font-size:8.6px;color:#eef0f0;font-weight:normal;font-style:normal;white-space:pre;transform:scaleX(0.961);transform-origin:0 0;z-index:5">Model</div>
<div style="position:absolute;left:95.30px;top:296.84px;height:10.32px;line-height:10.32px;font-size:8.6px;color:#eef0f0;font-weight:normal;font-style:normal;white-space:pre;transform:scaleX(0.841);transform-origin:0 0;z-index:5">Analysis</div>
<div style="position:absolute;left:148.90px;top:296.84px;height:10.32px;line-height:10.32px;font-size:8.6px;color:#eef0f0;font-weight:normal;font-style:normal;white-space:pre;transform:scaleX(0.853);transform-origin:0 0;z-index:5">Live Simulation</div>
<div style="position:absolute;left:225.30px;top:296.84px;height:10.32px;line-height:10.32px;font-size:8.6px;color:#eef0f0;font-weight:normal;font-style:normal;white-space:pre;transform:scaleX(0.982);transform-origin:0 0;z-index:5">Annotate</div>
<div style="position:absolute;left:282.30px;top:296.84px;height:10.32px;line-height:10.32px;font-size:8.6px;color:#eef0f0;font-weight:normal;font-style:normal;white-space:pre;transform:scaleX(0.902);transform-origin:0 0;z-index:5">Tools</div>
<div style="position:absolute;left:327.80px;top:296.84px;height:10.32px;line-height:10.32px;font-size:8.6px;color:#eef0f0;font-weight:normal;font-style:normal;white-space:pre;transform:scaleX(0.849);transform-origin:0 0;z-index:5">View</div>
<div style="position:absolute;left:370.20px;top:296.84px;height:10.32px;line-height:10.32px;font-size:8.6px;color:#eef0f0;font-weight:normal;font-style:normal;white-space:pre;transform:scaleX(0.885);transform-origin:0 0;z-index:5">Flexible Modeling</div>
<div style="position:absolute;left:456.50px;top:296.84px;height:10.32px;line-height:10.32px;font-size:8.6px;color:#eef0f0;font-weight:normal;font-style:normal;white-space:pre;transform:scaleX(0.870);transform-origin:0 0;z-index:5">Applications</div>
<div style="position:absolute;left:527.40px;top:296.84px;height:10.32px;line-height:10.32px;font-size:8.6px;color:#555;font-weight:normal;font-style:italic;white-space:pre;transform:scaleX(0.912);transform-origin:0 0;z-index:5">Bend Back</div>
<div style="position:absolute;left:0px;top:310px;width:866px;height:61px;background:#f5f7f8;z-index:1;"></div>
<div style="position:absolute;left:0px;top:370.5px;width:866px;height:1px;background:#d5d9dc;z-index:2;"></div>
<div style="position:absolute;left:29px;top:312px;width:1px;height:58px;background:#d8dcdf;z-index:2;"></div>
<div style="position:absolute;left:259px;top:312px;width:1px;height:58px;background:#d8dcdf;z-index:2;"></div>
<div style="position:absolute;left:371px;top:312px;width:1px;height:58px;background:#d8dcdf;z-index:2;"></div>
<div style="position:absolute;left:436px;top:312px;width:1px;height:58px;background:#d8dcdf;z-index:2;"></div>
<div style="position:absolute;left:32.40px;top:314.66px;height:10.08px;line-height:10.08px;font-size:8.4px;color:#3a3a3a;font-weight:bold;font-style:normal;white-space:pre;transform:scaleX(0.796);transform-origin:0 0;z-index:5">Settings</div>
<div style="position:absolute;left:38.5px;top:330.7px;width:16px;height:16px;background:#dadde0;z-index:2;box-sizing:border-box;border:1px solid #c4c8cc;"></div>
<div style="position:absolute;left:91.3px;top:332.1px;width:71px;height:12.4px;background:#f1f7e2;z-index:2;box-sizing:border-box;border:1px solid #cdd3c4;"></div>
<div style="position:absolute;left:94.60px;top:333.78px;height:9.84px;line-height:9.84px;font-size:8.2px;color:#333;font-weight:normal;font-style:normal;white-space:pre;transform:scaleX(0.749);transform-origin:0 0;z-index:5">Surf:F5(EXTRUDE_1)</div>
<div style="position:absolute;left:167.4px;top:331.3px;width:15.7px;height:15.2px;background:#e4e6e8;z-index:2;box-sizing:border-box;border:1px solid #cdd0d4;"></div>
<div style="position:absolute;left:65px;top:358.4px;width:182.3px;height:12.4px;background:#e3e6e9;z-index:2;box-sizing:border-box;border:1px solid #cfd3d6;border-bottom:none;"></div>
<div style="position:absolute;left:124.5px;top:358.4px;width:65px;height:12.4px;background:#f8f9fa;z-index:3;box-sizing:border-box;border:1px solid #cfd3d6;border-bottom:none;"></div>
<div style="position:absolute;left:126.5px;top:360px;width:61.5px;height:10.6px;background:#ffffff;z-index:3;box-sizing:border-box;border:1px solid #8a8f94;"></div>
<div style="position:absolute;left:78.00px;top:360.08px;height:9.84px;line-height:9.84px;font-size:8.2px;color:#444;font-weight:normal;font-style:normal;white-space:pre;transform:scaleX(0.781);transform-origin:0 0;z-index:5">References</div>
<div style="position:absolute;left:137.00px;top:360.08px;height:9.84px;line-height:9.84px;font-size:8.2px;color:#333;font-weight:normal;font-style:normal;white-space:pre;transform:scaleX(0.843);transform-origin:0 0;z-index:5">Bend Control</div>
<div style="position:absolute;left:203.80px;top:360.08px;height:9.84px;line-height:9.84px;font-size:8.2px;color:#444;font-weight:normal;font-style:normal;white-space:pre;transform:scaleX(0.817);transform-origin:0 0;z-index:5">Properties</div>
<div style="position:absolute;left:380px;top:324px;width:23px;height:33px;background:#bde3f7;z-index:2;box-sizing:border-box;border:1px solid #a6d4ef;"></div>
<div style="position:absolute;left:386.00px;top:345.08px;height:9.84px;line-height:9.84px;font-size:8.2px;color:#333;font-weight:normal;font-style:normal;white-space:pre;transform:scaleX(0.887);transform-origin:0 0;z-index:5">OK</div>
<div style="position:absolute;left:405.00px;top:345.08px;height:9.84px;line-height:9.84px;font-size:8.2px;color:#333;font-weight:normal;font-style:normal;white-space:pre;transform:scaleX(0.843);transform-origin:0 0;z-index:5">Cancel</div>
<div style="position:absolute;left:272px;top:335px;width:5px;height:12px;background:#666a6e;z-index:2;"></div>
<div style="position:absolute;left:281px;top:335px;width:5px;height:12px;background:#666a6e;z-index:2;"></div>
<div style="position:absolute;left:307px;top:330.5px;width:16px;height:16px;background:#dcdfe2;z-index:2;box-sizing:border-box;border:1px solid #c8ccd0;"></div>
<div style="position:absolute;left:0px;top:371px;width:866px;height:327px;background:#e9eaed;z-index:1;"></div>
<div style="position:absolute;left:0px;top:371px;width:155px;height:327px;background:#f6f8f9;z-index:2;"></div>
<div style="position:absolute;left:154.5px;top:371px;width:1.2px;height:327px;background:#c9d1d3;z-index:2;"></div>
<div style="position:absolute;left:0px;top:371px;width:155px;height:17.5px;background:#e3e6e9;z-index:2;"></div>
<div style="position:absolute;left:0px;top:371px;width:57.3px;height:17.5px;background:#f6f8f9;z-index:3;"></div>
<div style="position:absolute;left:17.60px;top:375.98px;height:9.84px;line-height:9.84px;font-size:8.2px;color:#444;font-weight:normal;font-style:normal;white-space:pre;transform:scaleX(0.847);transform-origin:0 0;z-index:5">Model Tree</div>
<div style="position:absolute;left:75.00px;top:375.98px;height:9.84px;line-height:9.84px;font-size:8.2px;color:#6a6a6a;font-weight:normal;font-style:normal;white-space:pre;transform:scaleX(0.808);transform-origin:0 0;z-index:5">Folder B</div>
<div style="position:absolute;left:16.30px;top:392.48px;height:9.84px;line-height:9.84px;font-size:8.2px;color:#333;font-weight:bold;font-style:normal;white-space:pre;transform:scaleX(0.841);transform-origin:0 0;z-index:5">Model Tree</div>
<div style="position:absolute;left:18.2px;top:404.6px;width:140px;height:15.8px;background:#ffffff;z-index:3;box-sizing:border-box;border:1px solid #c5cacd;"></div>
<div style="position:absolute;left:18.50px;top:424.16px;height:9.48px;line-height:9.48px;font-size:7.9px;color:#3d3d3d;font-weight:normal;font-style:normal;white-space:pre;transform:scaleX(0.708);transform-origin:0 0;z-index:5">COVER.PRT</div>
<div style="position:absolute;left:30.00px;top:435.46px;height:9.48px;line-height:9.48px;font-size:7.9px;color:#3d3d3d;font-weight:normal;font-style:normal;white-space:pre;transform:scaleX(0.713);transform-origin:0 0;z-index:5">RIGHT</div>
<div style="position:absolute;left:30.00px;top:446.86px;height:9.48px;line-height:9.48px;font-size:7.9px;color:#3d3d3d;font-weight:normal;font-style:normal;white-space:pre;transform:scaleX(0.777);transform-origin:0 0;z-index:5">TOP</div>
<div style="position:absolute;left:30.00px;top:458.26px;height:9.48px;line-height:9.48px;font-size:7.9px;color:#3d3d3d;font-weight:normal;font-style:normal;white-space:pre;transform:scaleX(0.736);transform-origin:0 0;z-index:5">FRONT</div>
<div style="position:absolute;left:30.00px;top:469.86px;height:9.48px;line-height:9.48px;font-size:7.9px;color:#3d3d3d;font-weight:normal;font-style:normal;white-space:pre;transform:scaleX(0.665);transform-origin:0 0;z-index:5">PRT_CSYS_DEF</div>
<div style="position:absolute;left:30.00px;top:481.26px;height:9.48px;line-height:9.48px;font-size:7.9px;color:#3d3d3d;font-weight:normal;font-style:normal;white-space:pre;transform:scaleX(0.817);transform-origin:0 0;z-index:5">Extrude 1(First Wall)</div>
<div style="position:absolute;left:30.00px;top:492.86px;height:9.48px;line-height:9.48px;font-size:7.9px;color:#3d3d3d;font-weight:normal;font-style:normal;white-space:pre;transform:scaleX(0.785);transform-origin:0 0;z-index:5">Flat 1</div>
<div style="position:absolute;left:30.00px;top:504.26px;height:9.48px;line-height:9.48px;font-size:7.9px;color:#3d3d3d;font-weight:normal;font-style:normal;white-space:pre;transform:scaleX(0.811);transform-origin:0 0;z-index:5">Flat 2</div>
<div style="position:absolute;left:30.00px;top:515.86px;height:9.48px;line-height:9.48px;font-size:7.9px;color:#3d3d3d;font-weight:normal;font-style:normal;white-space:pre;transform:scaleX(0.846);transform-origin:0 0;z-index:5">Mirror 1</div>
<div style="position:absolute;left:41.50px;top:527.26px;height:9.48px;line-height:9.48px;font-size:7.9px;color:#3d3d3d;font-weight:normal;font-style:normal;white-space:pre;transform:scaleX(0.792);transform-origin:0 0;z-index:5">Flat 1 (2)</div>
<div style="position:absolute;left:41.50px;top:538.86px;height:9.48px;line-height:9.48px;font-size:7.9px;color:#3d3d3d;font-weight:normal;font-style:normal;white-space:pre;transform:scaleX(0.792);transform-origin:0 0;z-index:5">Flat 2 (2)</div>
<div style="position:absolute;left:30.00px;top:550.26px;height:9.48px;line-height:9.48px;font-size:7.9px;color:#3d3d3d;font-weight:normal;font-style:normal;white-space:pre;transform:scaleX(0.605);transform-origin:0 0;z-index:5">DTM1</div>
<div style="position:absolute;left:30.00px;top:561.66px;height:9.48px;line-height:9.48px;font-size:7.9px;color:#3d3d3d;font-weight:normal;font-style:normal;white-space:pre;transform:scaleX(0.747);transform-origin:0 0;z-index:5">A_1</div>
<div style="position:absolute;left:30.00px;top:573.26px;height:9.48px;line-height:9.48px;font-size:7.9px;color:#3d3d3d;font-weight:normal;font-style:normal;white-space:pre;transform:scaleX(0.827);transform-origin:0 0;z-index:5">Pattern 1 of Extrude 2</div>
<div style="position:absolute;left:30.00px;top:584.86px;height:9.48px;line-height:9.48px;font-size:7.9px;color:#3d3d3d;font-weight:normal;font-style:normal;white-space:pre;transform:scaleX(0.846);transform-origin:0 0;z-index:5">Mirror 2</div>
<div style="position:absolute;left:41.50px;top:596.26px;height:9.48px;line-height:9.48px;font-size:7.9px;color:#3d3d3d;font-weight:normal;font-style:normal;white-space:pre;transform:scaleX(0.801);transform-origin:0 0;z-index:5">Pattern 1 (2) of Extrude 2 (2)</div>
<div style="position:absolute;left:30.00px;top:607.86px;height:9.48px;line-height:9.48px;font-size:7.9px;color:#3d3d3d;font-weight:normal;font-style:normal;white-space:pre;transform:scaleX(0.832);transform-origin:0 0;z-index:5">Unbend 1</div>
<div style="position:absolute;left:30.00px;top:619.26px;height:9.48px;line-height:9.48px;font-size:7.9px;color:#3d3d3d;font-weight:normal;font-style:normal;white-space:pre;transform:scaleX(0.827);transform-origin:0 0;z-index:5">Pattern 2 of Extrude 3</div>
<div style="position:absolute;left:30.00px;top:630.86px;height:9.48px;line-height:9.48px;font-size:7.9px;color:#3d3d3d;font-weight:normal;font-style:normal;white-space:pre;transform:scaleX(0.846);transform-origin:0 0;z-index:5">Mirror 3</div>
<div style="position:absolute;left:41.50px;top:642.26px;height:9.48px;line-height:9.48px;font-size:7.9px;color:#3d3d3d;font-weight:normal;font-style:normal;white-space:pre;transform:scaleX(0.801);transform-origin:0 0;z-index:5">Pattern 2 (2) of Extrude 3 (2)</div>
<div style="position:absolute;left:30.00px;top:653.66px;height:9.48px;line-height:9.48px;font-size:7.9px;color:#3d3d3d;font-weight:normal;font-style:normal;white-space:pre;transform:scaleX(0.793);transform-origin:0 0;z-index:5">Bend Back 1</div>
<div style="position:absolute;left:30.00px;top:665.26px;height:9.48px;line-height:9.48px;font-size:7.9px;color:#3d3d3d;font-weight:normal;font-style:normal;white-space:pre;transform:scaleX(0.811);transform-origin:0 0;z-index:5">Flat 3</div>
<div style="position:absolute;left:30.00px;top:676.66px;height:9.48px;line-height:9.48px;font-size:7.9px;color:#3d3d3d;font-weight:normal;font-style:normal;white-space:pre;transform:scaleX(0.864);transform-origin:0 0;z-index:5">Mirror 4</div>
<div style="position:absolute;left:30.00px;top:687.96px;height:9.48px;line-height:9.48px;font-size:7.9px;color:#3d3d3d;font-weight:normal;font-style:normal;white-space:pre;transform:scaleX(0.847);transform-origin:0 0;z-index:5">Unbend 2</div>
<svg style="position:absolute;left:0px;top:0px;z-index:4;overflow:visible;" width="868" height="701" viewBox="0 0 868 701"><defs><clipPath id="gfx2"><rect x="155.5" y="371" width="710.5" height="326.5"/></clipPath>
<clipPath id="gclip"><path d="M385 165 L678.5 165 L676.5 277.6 L384 277.6 Z"/></clipPath></defs>
<g clip-path="url(#gfx2)">
<g fill="none" stroke="#9a9ea4" stroke-width="0.7"><path d="M189 485 L847 379 M189 485 L193 641 L851.5 535.5 L847 379"/></g>
<g transform="matrix(1.04886,-0.17605,0.03337,1.04858,-44.486,387.82)" style="--mf:#727c89;--ms:#2f353c;--sf:#eeeff1;--rf:#eeeff1;--bg:#e9eaed">
 <use href="#mdlbody"/><use href="#mdllines"/>
 <g clip-path="url(#gclip)"><rect x="380" y="160" width="310" height="120" fill="#046a06"/></g>
 <use href="#mdlholes"/>
 <g clip-path="url(#gclip)"><path d="M409.80 217.20 L410.47 212.03 L411.74 206.95 L413.61 202.01 L416.05 197.26 L419.05 192.77 L422.56 188.58 L426.54 184.72 L430.97 181.25 L435.78 178.21 L440.92 175.61 L446.35 173.51 L451.99 171.90 L457.80 170.82 L463.70 170.28 L463.70 175.90 L458.52 176.41 L453.42 177.38 L448.46 178.81 L443.70 180.67 L439.18 182.96 L434.96 185.64 L431.07 188.69 L427.56 192.08 L424.47 195.76 L421.82 199.70 L419.65 203.86 L417.99 208.20 L416.84 212.66 L416.22 217.20ZM409.80 223.20 L410.47 228.37 L411.74 233.45 L413.61 238.39 L416.05 243.14 L419.05 247.63 L422.56 251.82 L426.54 255.68 L430.97 259.15 L435.78 262.19 L440.92 264.79 L446.35 266.89 L451.99 268.50 L457.80 269.58 L463.70 270.12 L463.70 264.50 L458.52 263.99 L453.42 263.02 L448.46 261.59 L443.70 259.73 L439.18 257.44 L434.96 254.76 L431.07 251.71 L427.56 248.32 L424.47 244.64 L421.82 240.70 L419.65 236.54 L417.99 232.20 L416.84 227.74 L416.22 223.20ZM523.60 217.20 L522.93 212.03 L521.66 206.95 L519.79 202.01 L517.35 197.26 L514.35 192.77 L510.84 188.58 L506.86 184.72 L502.43 181.25 L497.62 178.21 L492.48 175.61 L487.05 173.51 L481.41 171.90 L475.60 170.82 L469.70 170.28 L469.70 175.90 L474.88 176.41 L479.98 177.38 L484.94 178.81 L489.70 180.67 L494.22 182.96 L498.44 185.64 L502.33 188.69 L505.84 192.08 L508.93 195.76 L511.58 199.70 L513.75 203.86 L515.41 208.20 L516.56 212.66 L517.18 217.20ZM523.60 223.20 L522.93 228.37 L521.66 233.45 L519.79 238.39 L517.35 243.14 L514.35 247.63 L510.84 251.82 L506.86 255.68 L502.43 259.15 L497.62 262.19 L492.48 264.79 L487.05 266.89 L481.41 268.50 L475.60 269.58 L469.70 270.12 L469.70 264.50 L474.88 263.99 L479.98 263.02 L484.94 261.59 L489.70 259.73 L494.22 257.44 L498.44 254.76 L502.33 251.71 L505.84 248.32 L508.93 244.64 L511.58 240.70 L513.75 236.54 L515.41 232.20 L516.56 227.74 L517.18 223.20ZM419.42 217.20 L420.02 212.97 L421.11 208.82 L422.68 204.79 L424.71 200.92 L427.18 197.25 L430.06 193.82 L433.33 190.68 L436.95 187.84 L440.89 185.34 L445.09 183.20 L449.52 181.46 L454.13 180.12 L458.87 179.20 L463.70 178.71 L463.70 184.34 L459.59 184.79 L455.56 185.60 L451.64 186.76 L447.87 188.26 L444.29 190.09 L440.94 192.22 L437.86 194.64 L435.07 197.32 L432.60 200.24 L430.48 203.36 L428.72 206.64 L427.36 210.07 L426.40 213.60 L425.84 217.20ZM419.42 223.20 L420.02 227.43 L421.11 231.58 L422.68 235.61 L424.71 239.48 L427.18 243.15 L430.06 246.58 L433.33 249.72 L436.95 252.56 L440.89 255.06 L445.09 257.20 L449.52 258.94 L454.13 260.28 L458.87 261.20 L463.70 261.69 L463.70 256.06 L459.59 255.61 L455.56 254.80 L451.64 253.64 L447.87 252.14 L444.29 250.31 L440.94 248.18 L437.86 245.76 L435.07 243.08 L432.60 240.16 L430.48 237.04 L428.72 233.76 L427.36 230.33 L426.40 226.80 L425.84 223.20ZM513.98 217.20 L513.38 212.97 L512.29 208.82 L510.72 204.79 L508.69 200.92 L506.22 197.25 L503.34 193.82 L500.07 190.68 L496.45 187.84 L492.51 185.34 L488.31 183.20 L483.88 181.46 L479.27 180.12 L474.53 179.20 L469.70 178.71 L469.70 184.34 L473.81 184.79 L477.84 185.60 L481.76 186.76 L485.53 188.26 L489.11 190.09 L492.46 192.22 L495.54 194.64 L498.33 197.32 L500.80 200.24 L502.92 203.36 L504.68 206.64 L506.04 210.07 L507.00 213.60 L507.56 217.20ZM513.98 223.20 L513.38 227.43 L512.29 231.58 L510.72 235.61 L508.69 239.48 L506.22 243.15 L503.34 246.58 L500.07 249.72 L496.45 252.56 L492.51 255.06 L488.31 257.20 L483.88 258.94 L479.27 260.28 L474.53 261.20 L469.70 261.69 L469.70 256.06 L473.81 255.61 L477.84 254.80 L481.76 253.64 L485.53 252.14 L489.11 250.31 L492.46 248.18 L495.54 245.76 L498.33 243.08 L500.80 240.16 L502.92 237.04 L504.68 233.76 L506.04 230.33 L507.00 226.80 L507.56 223.20ZM428.85 217.20 L429.39 213.90 L430.29 210.66 L431.56 207.51 L433.18 204.50 L435.14 201.64 L437.41 198.97 L439.98 196.50 L442.81 194.28 L445.89 192.32 L449.17 190.63 L452.63 189.24 L456.23 188.17 L459.93 187.41 L463.70 186.98 L463.70 193.23 L460.73 193.61 L457.81 194.25 L454.97 195.13 L452.25 196.25 L449.67 197.59 L447.24 199.15 L445.00 200.91 L442.97 202.85 L441.16 204.95 L439.59 207.20 L438.27 209.57 L437.23 212.05 L436.47 214.60 L435.99 217.20ZM428.85 223.20 L429.39 226.50 L430.29 229.74 L431.56 232.89 L433.18 235.90 L435.14 238.76 L437.41 241.43 L439.98 243.90 L442.81 246.12 L445.89 248.08 L449.17 249.77 L452.63 251.16 L456.23 252.23 L459.93 252.99 L463.70 253.42 L463.70 247.17 L460.73 246.79 L457.81 246.15 L454.97 245.27 L452.25 244.15 L449.67 242.81 L447.24 241.25 L445.00 239.49 L442.97 237.55 L441.16 235.45 L439.59 233.20 L438.27 230.83 L437.23 228.35 L436.47 225.80 L435.99 223.20ZM504.55 217.20 L504.01 213.90 L503.11 210.66 L501.84 207.51 L500.22 204.50 L498.26 201.64 L495.99 198.97 L493.42 196.50 L490.59 194.28 L487.51 192.32 L484.23 190.63 L480.77 189.24 L477.17 188.17 L473.47 187.41 L469.70 186.98 L469.70 193.23 L472.67 193.61 L475.59 194.25 L478.43 195.13 L481.15 196.25 L483.73 197.59 L486.16 199.15 L488.40 200.91 L490.43 202.85 L492.24 204.95 L493.81 207.20 L495.13 209.57 L496.17 212.05 L496.93 214.60 L497.41 217.20ZM504.55 223.20 L504.01 226.50 L503.11 229.74 L501.84 232.89 L500.22 235.90 L498.26 238.76 L495.99 241.43 L493.42 243.90 L490.59 246.12 L487.51 248.08 L484.23 249.77 L480.77 251.16 L477.17 252.23 L473.47 252.99 L469.70 253.42 L469.70 247.17 L472.67 246.79 L475.59 246.15 L478.43 245.27 L481.15 244.15 L483.73 242.81 L486.16 241.25 L488.40 239.49 L490.43 237.55 L492.24 235.45 L493.81 233.20 L495.13 230.83 L496.17 228.35 L496.93 225.80 L497.41 223.20ZM538.00 217.20 L538.67 212.03 L539.94 206.95 L541.81 202.01 L544.25 197.26 L547.25 192.77 L550.76 188.58 L554.74 184.72 L559.17 181.25 L563.98 178.21 L569.12 175.61 L574.55 173.51 L580.19 171.90 L586.00 170.82 L591.90 170.28 L591.90 175.90 L586.72 176.41 L581.62 177.38 L576.66 178.81 L571.90 180.67 L567.38 182.96 L563.16 185.64 L559.27 188.69 L555.76 192.08 L552.67 195.76 L550.02 199.70 L547.85 203.86 L546.19 208.20 L545.04 212.66 L544.42 217.20ZM538.00 223.20 L538.67 228.37 L539.94 233.45 L541.81 238.39 L544.25 243.14 L547.25 247.63 L550.76 251.82 L554.74 255.68 L559.17 259.15 L563.98 262.19 L569.12 264.79 L574.55 266.89 L580.19 268.50 L586.00 269.58 L591.90 270.12 L591.90 264.50 L586.72 263.99 L581.62 263.02 L576.66 261.59 L571.90 259.73 L567.38 257.44 L563.16 254.76 L559.27 251.71 L555.76 248.32 L552.67 244.64 L550.02 240.70 L547.85 236.54 L546.19 232.20 L545.04 227.74 L544.42 223.20ZM651.80 217.20 L651.13 212.03 L649.86 206.95 L647.99 202.01 L645.55 197.26 L642.55 192.77 L639.04 188.58 L635.06 184.72 L630.63 181.25 L625.82 178.21 L620.68 175.61 L615.25 173.51 L609.61 171.90 L603.80 170.82 L597.90 170.28 L597.90 175.90 L603.08 176.41 L608.18 177.38 L613.14 178.81 L617.90 180.67 L622.42 182.96 L626.64 185.64 L630.53 188.69 L634.04 192.08 L637.13 195.76 L639.78 199.70 L641.95 203.86 L643.61 208.20 L644.76 212.66 L645.38 217.20ZM651.80 223.20 L651.13 228.37 L649.86 233.45 L647.99 238.39 L645.55 243.14 L642.55 247.63 L639.04 251.82 L635.06 255.68 L630.63 259.15 L625.82 262.19 L620.68 264.79 L615.25 266.89 L609.61 268.50 L603.80 269.58 L597.90 270.12 L597.90 264.50 L603.08 263.99 L608.18 263.02 L613.14 261.59 L617.90 259.73 L622.42 257.44 L626.64 254.76 L630.53 251.71 L634.04 248.32 L637.13 244.64 L639.78 240.70 L641.95 236.54 L643.61 232.20 L644.76 227.74 L645.38 223.20ZM547.62 217.20 L548.22 212.97 L549.31 208.82 L550.88 204.79 L552.91 200.92 L555.38 197.25 L558.26 193.82 L561.53 190.68 L565.15 187.84 L569.09 185.34 L573.29 183.20 L577.72 181.46 L582.33 180.12 L587.07 179.20 L591.90 178.71 L591.90 184.34 L587.79 184.79 L583.76 185.60 L579.84 186.76 L576.07 188.26 L572.49 190.09 L569.14 192.22 L566.06 194.64 L563.27 197.32 L560.80 200.24 L558.68 203.36 L556.92 206.64 L555.56 210.07 L554.60 213.60 L554.04 217.20ZM547.62 223.20 L548.22 227.43 L549.31 231.58 L550.88 235.61 L552.91 239.48 L555.38 243.15 L558.26 246.58 L561.53 249.72 L565.15 252.56 L569.09 255.06 L573.29 257.20 L577.72 258.94 L582.33 260.28 L587.07 261.20 L591.90 261.69 L591.90 256.06 L587.79 255.61 L583.76 254.80 L579.84 253.64 L576.07 252.14 L572.49 250.31 L569.14 248.18 L566.06 245.76 L563.27 243.08 L560.80 240.16 L558.68 237.04 L556.92 233.76 L555.56 230.33 L554.60 226.80 L554.04 223.20ZM642.18 217.20 L641.58 212.97 L640.49 208.82 L638.92 204.79 L636.89 200.92 L634.42 197.25 L631.54 193.82 L628.27 190.68 L624.65 187.84 L620.71 185.34 L616.51 183.20 L612.08 181.46 L607.47 180.12 L602.73 179.20 L597.90 178.71 L597.90 184.34 L602.01 184.79 L606.04 185.60 L609.96 186.76 L613.73 188.26 L617.31 190.09 L620.66 192.22 L623.74 194.64 L626.53 197.32 L629.00 200.24 L631.12 203.36 L632.88 206.64 L634.24 210.07 L635.20 213.60 L635.76 217.20ZM642.18 223.20 L641.58 227.43 L640.49 231.58 L638.92 235.61 L636.89 239.48 L634.42 243.15 L631.54 246.58 L628.27 249.72 L624.65 252.56 L620.71 255.06 L616.51 257.20 L612.08 258.94 L607.47 260.28 L602.73 261.20 L597.90 261.69 L597.90 256.06 L602.01 255.61 L606.04 254.80 L609.96 253.64 L613.73 252.14 L617.31 250.31 L620.66 248.18 L623.74 245.76 L626.53 243.08 L629.00 240.16 L631.12 237.04 L632.88 233.76 L634.24 230.33 L635.20 226.80 L635.76 223.20ZM557.05 217.20 L557.59 213.90 L558.49 210.66 L559.76 207.51 L561.38 204.50 L563.34 201.64 L565.61 198.97 L568.18 196.50 L571.01 194.28 L574.09 192.32 L577.37 190.63 L580.83 189.24 L584.43 188.17 L588.13 187.41 L591.90 186.98 L591.90 193.23 L588.93 193.61 L586.01 194.25 L583.17 195.13 L580.45 196.25 L577.87 197.59 L575.44 199.15 L573.20 200.91 L571.17 202.85 L569.36 204.95 L567.79 207.20 L566.47 209.57 L565.43 212.05 L564.67 214.60 L564.19 217.20ZM557.05 223.20 L557.59 226.50 L558.49 229.74 L559.76 232.89 L561.38 235.90 L563.34 238.76 L565.61 241.43 L568.18 243.90 L571.01 246.12 L574.09 248.08 L577.37 249.77 L580.83 251.16 L584.43 252.23 L588.13 252.99 L591.90 253.42 L591.90 247.17 L588.93 246.79 L586.01 246.15 L583.17 245.27 L580.45 244.15 L577.87 242.81 L575.44 241.25 L573.20 239.49 L571.17 237.55 L569.36 235.45 L567.79 233.20 L566.47 230.83 L565.43 228.35 L564.67 225.80 L564.19 223.20ZM632.75 217.20 L632.21 213.90 L631.31 210.66 L630.04 207.51 L628.42 204.50 L626.46 201.64 L624.19 198.97 L621.62 196.50 L618.79 194.28 L615.71 192.32 L612.43 190.63 L608.97 189.24 L605.37 188.17 L601.67 187.41 L597.90 186.98 L597.90 193.23 L600.87 193.61 L603.79 194.25 L606.63 195.13 L609.35 196.25 L611.93 197.59 L614.36 199.15 L616.60 200.91 L618.63 202.85 L620.44 204.95 L622.01 207.20 L623.33 209.57 L624.37 212.05 L625.13 214.60 L625.61 217.20ZM632.75 223.20 L632.21 226.50 L631.31 229.74 L630.04 232.89 L628.42 235.90 L626.46 238.76 L624.19 241.43 L621.62 243.90 L618.79 246.12 L615.71 248.08 L612.43 249.77 L608.97 251.16 L605.37 252.23 L601.67 252.99 L597.90 253.42 L597.90 247.17 L600.87 246.79 L603.79 246.15 L606.63 245.27 L609.35 244.15 L611.93 242.81 L614.36 241.25 L616.60 239.49 L618.63 237.55 L620.44 235.45 L622.01 233.20 L623.33 230.83 L624.37 228.35 L625.13 225.80 L625.61 223.20Z" fill="#f2f2f2" stroke="none"/></g>
 <path d="M385 165 L678.5 165 L676.5 277.6 L384 277.6 Z" fill="none" stroke="#7fd040" stroke-width="0.8"/>
 <path d="M220.6 276.6 L841.5 277.3" stroke="#1c2026" stroke-width="1.6"/>
</g>
</g></svg>
<svg style="position:absolute;left:0px;top:0px;z-index:5;overflow:visible;" width="868" height="701" viewBox="0 0 868 701"><g clip-path="url(#gfx2)">
<path d="M254.6 540 L254.6 634" stroke="#a06050" stroke-width="0.8" stroke-dasharray="1 2" fill="none"/>
<path d="M444.5 432.5 L453 595 M451 441 L458.5 607 M444.5 432.5 L451 441 M512.6 422 L520 585 M518 430 L526 596 M512.6 422 L518 430" stroke="#8a7e7a" stroke-width="0.7" fill="none" stroke-opacity="0.85"/>
<path d="M234 551.3 L852 458 M234 582.6 L852 480" stroke="#a0a4a8" stroke-width="0.7" fill="none" stroke-opacity="0.8"/>
<path d="M364.8 493.1 L672.7 441.4 L673.3 460.3 L365.4 511.9Z" fill="#f5a21a" fill-opacity="0.72" stroke="#f5a21a" stroke-width="1"/>
<ellipse cx="431" cy="498" rx="7" ry="3.5" fill="#f5a21a" fill-opacity="0.5" stroke="#f5a21a" stroke-width="1.2" transform="rotate(-9 431 498)"/>
<ellipse cx="525.5" cy="482" rx="7" ry="3.5" fill="#f5a21a" fill-opacity="0.5" stroke="#f5a21a" stroke-width="1.2" transform="rotate(-9 525.5 482)"/>
<path d="M367.0 492.5 L350.0 500.0 L335.0 509.5 L318.0 521.5 L307.0 530.5 L302.5 538.0 L301.5 548.0 L302.5 620.0 L304.4 666.5 L318.5 694.7 L318.5 645.9 L330.0 633.0 L346.8 617.6 L367.4 610.0 L365.5 508.0Z" fill="#f5a21a" fill-opacity="0.42" stroke="#f5a21a" stroke-width="1.3"/>
<path d="M672.9 442.6 L697.0 443.5 L724.0 451.7 L751.2 459.8 L770.2 466.6 L779.7 474.7 L785.1 486.9 L787.8 500.4 L789.5 516.7 L794.6 519.4 L796.7 614.1 L786.4 592.5 L778.0 584.0 L766.1 577.6 L702.5 560.0 L674.3 559.8 L674.3 463.0Z" fill="#f5a21a" fill-opacity="0.42" stroke="#f5a21a" stroke-width="1.3"/>
<path d="M301.5 548.0 L302.5 620.0 L304.4 666.5 L318.5 694.7 L318.5 645.9 L330.0 633.0 L346.8 617.6 L367.4 610.0 L366.0 537.0 L357.0 539.0 L350.0 542.0 L343.3 547.0 L337.0 553.0 L333.0 560.0 L331.5 566.0Z" fill="#f5a21a" fill-opacity="0.45"/>
<path d="M674.0 486.0 L700.0 487.0 L724.0 490.0 L751.0 496.0 L766.0 500.0 L776.0 505.0 L782.0 510.0 L785.0 515.0 L786.4 521.0 L789.5 516.7 L794.6 519.4 L796.7 614.1 L786.4 592.5 L778.0 584.0 L766.1 577.6 L702.5 560.0 L674.3 559.8Z" fill="#f5a21a" fill-opacity="0.45"/>
<g fill="none" stroke="#f5a21a" stroke-width="1.5"><path d="M366.8 500.5 L351.3 507.0 L337.7 515.4 L322.6 526.1 L312.4 534.5 L308.0 542.0 L306.9 551.2M366.6 508.5 L352.5 514.0 L340.4 521.2 L327.1 530.7 L317.8 538.6 L313.5 545.9 L312.3 554.5M366.5 516.5 L353.8 521.1 L343.1 527.0 L331.7 535.3 L323.2 542.6 L319.0 549.9 L317.7 557.7M366.3 524.5 L355.0 528.1 L345.8 532.9 L336.2 539.9 L328.6 546.7 L324.5 553.8 L323.1 561.0M366.0 537.0 L357.0 539.0 L350.0 542.0 L343.3 547.0 L337.0 553.0 L333.0 560.0 L331.5 566.0M673.1 451.3 L697.6 452.2 L724.0 459.4 L751.2 467.0 L769.4 473.3 L779.0 480.8 L784.5 491.5 L787.2 503.3 L788.9 517.6M673.4 460.8 L698.3 461.8 L724.0 467.8 L751.1 475.0 L768.4 480.6 L778.1 487.4 L783.8 496.6 L786.6 506.5 L788.2 518.5M673.6 470.8 L699.0 471.8 L724.0 476.6 L751.1 483.3 L767.5 488.3 L777.3 494.4 L783.1 501.9 L786.0 509.9 L787.5 519.5M673.8 479.5 L699.5 480.5 L724.0 484.3 L751.0 490.6 L766.6 495.0 L776.6 500.5 L782.5 506.5 L785.4 512.8 L786.9 520.4M674.0 486.0 L700.0 487.0 L724.0 490.0 L751.0 496.0 L766.0 500.0 L776.0 505.0 L782.0 510.0 L785.0 515.0 L786.4 521.0 M331.5 566 L333 604 M343.3 547 L345.5 616.4 M310.8 543 L313 560 L318.5 646 M306 545 L308 600 L311 680 M310 583 L343 577 L346 589 L313 598 Z M318 587 L338 583 M786.4 521 L786.4 592.5 M702.5 487 L702.5 560 M766.1 500 L766.1 577.6 M789.5 516.7 L794.6 519.4 M752 519 L790 513 L792 525 L756 530 Z"/></g>
</g></svg>
<div style="position:absolute;left:124.4px;top:371.5px;width:143.8px;height:62.7px;background:#f8fafb;z-index:8;box-sizing:border-box;border:1px solid #dfe3e6;box-shadow:0 0 1px #ccc;"></div>
<div style="position:absolute;left:131.6px;top:385.8px;width:71px;height:41px;background:#ffffff;z-index:9;box-sizing:border-box;border:1px solid #c8ccd0;"></div>
<div style="position:absolute;left:132.6px;top:387.2px;width:69px;height:9.4px;background:#bfe6fb;z-index:10;"></div>
<div style="position:absolute;left:135.60px;top:386.90px;height:9.60px;line-height:9.60px;font-size:8.0px;color:#333;font-weight:normal;font-style:normal;white-space:pre;transform:scaleX(0.851);transform-origin:0 0;z-index:11">Contour 1</div>
<div style="position:absolute;left:135.60px;top:397.10px;height:9.60px;line-height:9.60px;font-size:8.0px;color:#555;font-weight:normal;font-style:normal;white-space:pre;transform:scaleX(0.851);transform-origin:0 0;z-index:11">Contour 2</div>
<div style="position:absolute;left:216.80px;top:388.70px;height:9.60px;line-height:9.60px;font-size:8.0px;color:#444;font-weight:normal;font-style:normal;white-space:pre;transform:scaleX(0.874);transform-origin:0 0;z-index:11">Bend contour</div>
<div style="position:absolute;left:216.80px;top:399.60px;height:9.60px;line-height:9.60px;font-size:8.0px;color:#444;font-weight:normal;font-style:normal;white-space:pre;transform:scaleX(0.830);transform-origin:0 0;z-index:11">Keep flat</div>
<svg style="position:absolute;left:0px;top:0px;z-index:11;overflow:visible;" width="868" height="701" viewBox="0 0 868 701"><circle cx="209.4" cy="393.5" r="3.2" fill="#fff" stroke="#555" stroke-width="0.9"/>
<circle cx="209.4" cy="404.4" r="3.2" fill="#fff" stroke="#555" stroke-width="0.9"/><circle cx="209.4" cy="404.4" r="1.6" fill="#222"/></svg>
<svg style="position:absolute;left:0px;top:0px;z-index:12;overflow:visible;" width="868" height="701" viewBox="0 0 868 701"><g stroke="#ee1111" stroke-width="1.3" fill="none">
<path d="M170.8 392.1 L776 503"/><path d="M163.6 407.8 L307 579"/></g>
<path d="M784 504.6 L774.5 498.6 L773.2 506.4 Z" fill="#ee1111"/>
<path d="M312.5 586.5 L302.8 580.2 L309 575.2 Z" fill="#ee1111"/>
<circle cx="170.8" cy="392.1" r="3.9" fill="#ee1111"/><circle cx="163.6" cy="407.8" r="3.9" fill="#ee1111"/></svg>
<div style="position:absolute;left:644px;top:95.3px;width:222px;height:21.7px;background:#f4f5f7;z-index:6;box-sizing:border-box;border:1px solid #c6cacf;"></div>
<div style="position:absolute;left:537px;top:376px;width:183.5px;height:17px;background:#f4f5f7;z-index:6;box-sizing:border-box;border:1px solid #c6cacf;"></div>
<svg style="position:absolute;left:0px;top:0px;z-index:4;overflow:visible;" width="868" height="701" viewBox="0 0 868 701"><rect x="14.6" y="21.3" width="5" height="5.2" fill="#eaf5fb" stroke="#3a9ad0" stroke-width="1.1"/><rect x="14.6" y="28.9" width="5" height="5.2" fill="#eaf5fb" stroke="#3a9ad0" stroke-width="1.1"/><rect x="14.6" y="36.1" width="5" height="5.2" fill="#eaf5fb" stroke="#3a9ad0" stroke-width="1.1"/><path d="M24 26 C24 22 28 21 31 22.5 L32.5 21 L33.8 25.6 L29.2 25.2 L30.6 23.8 C28.5 23 26.2 23.6 25.6 26 Z M34 25.5 C34 29.5 30 31 27 29.5 L25.5 31 L24.2 26.6 L28.8 27 L27.5 28.3 C29.5 29.2 31.8 28.6 32.4 26 Z" fill="#1f4f7c"/><path d="M22 34.7 H34.5 M22 37.7 H34.5 M22 40.6 H33" stroke="#8a8a8a" stroke-width="1"/><path d="M50.5 21 h5.5 l2 2 v6 h-7.5 z M54.5 24.5 h5.5 l2 2 v5.2 h-7.5 z" fill="#e8e8e8" stroke="#c0c0c0" stroke-width="0.9"/><path d="M50.5 40.5 h8 v9 h-8 z M52.5 39.2 h4 v2 h-4 z M55 44 h5.5 l1.5 1.5 v4.5 h-7 z" fill="#e6e6e6" stroke="#c0c0c0" stroke-width="0.9"/><path d="M51.5 58.5 L60 67 M60 58.5 L51.5 67" stroke="#6a6a6a" stroke-width="1.3"/><path d="M107 27 a5 4 0 0 1 9 -3 l1 1 v4 h-10 z" fill="#7fc4ea" stroke="#3a8cc0" stroke-width="0.8"/><path d="M111 31 l3 -8 l3 8 z" fill="#e6b060" stroke="#b07a30" stroke-width="0.7"/><rect x="107" y="40" width="3" height="9" fill="#555"/><rect x="111" y="39" width="5" height="5" fill="#444"/><rect x="112" y="43" width="5.5" height="7" fill="#6ac0ea" stroke="#3a90c8" stroke-width="0.7"/><path d="M214 24.2 L229.5 24.2 L224.5 37.6 L209 37.6 Z" fill="none" stroke="#9c7436" stroke-width="1.5"/><rect x="237.5" y="21.5" width="9.5" height="9" fill="none" stroke="#7a9ab8" stroke-width="0.7" stroke-dasharray="1 1"/><path d="M238.5 27 q2 -4 4 0 t4 0" fill="none" stroke="#2a8ad0" stroke-width="1.2"/><path d="M240 50 L246 39" stroke="#9c7436" stroke-width="1.3" stroke-dasharray="2.2 1.3"/><path d="M241 57 V65.5 H248.5 M241 65.5 L237.5 69" fill="none" stroke="#9c7436" stroke-width="1.2"/><path d="M332 38.5 L332 25.5 Q332 22.5 335 22.5 L341 22.5 L341 33.5 L351 33.5 L351 38.5 L335 41.5 Z" fill="#b5dca0" stroke="#5aa045" stroke-width="0.9"/><path d="M338 36.5 L352 33.5 L352 37.5 L338 41.5 Z" fill="#d8d8d8" stroke="#888" stroke-width="0.8"/><path d="M333 32.5 L341 29.5" stroke="#2a7ac0" stroke-width="1.2"/><path d="M360 38.5 L360 25.5 Q360 22.5 363 22.5 L369 22.5 L369 33.5 L379 33.5 L379 38.5 L363 41.5 Z" fill="#b5dca0" stroke="#5aa045" stroke-width="0.9"/><path d="M366 36.5 L380 33.5 L380 37.5 L366 41.5 Z" fill="#d8d8d8" stroke="#888" stroke-width="0.8"/><path d="M363 22.5 L363 34" stroke="#2a7ac0" stroke-width="1.2"/><path d="M388 24 l3 -3 h6 v7 l-3 3 h-6 z" fill="#d6ecf8" stroke="#6ab0dc" stroke-width="0.8"/><path d="M388 24 h6 v7 M394 24 l3 -3" fill="none" stroke="#6ab0dc" stroke-width="0.8"/><path d="M388 42 h9 l-2 8 h-7 z" fill="#6cc04a" stroke="#3a8a2a" stroke-width="0.8"/><path d="M388 66 q2 -8 9 -8 v8 q-5 -1 -9 0 z" fill="#d6ecf8" stroke="#6ab0dc" stroke-width="0.8"/><path d="M470.5 21.5 h22 v20 h-22 z" fill="#e8eaea" stroke="#ccc" stroke-width="0.8"/><path d="M471 22 v19 M492 22 v19" stroke="#7ac85a" stroke-width="1.2"/><path d="M481.5 22 v18" stroke="#3a90c0" stroke-width="1.2" stroke-dasharray="1 1.2"/><path d="M498 30 L508.5 40 L519 30 L519 33 L508.5 42.5 L498 33 Z" fill="#b8e0a0" stroke="#6ab050" stroke-width="0.8"/><path d="M506 22 h5 v12 l-2.5 3 l-2.5 -3 z" fill="#e8eef4" stroke="#aab" stroke-width="0.8"/><rect x="525.5" y="21.5" width="9.5" height="9.5" rx="1" fill="#a8dca0" stroke="#4a9a48" stroke-width="0.8"/><circle cx="530" cy="25.5" r="2.2" fill="#4aaad8" stroke="#1a6a9a" stroke-width="0.6"/><path d="M530 27.5 v2.5" stroke="#1a6a9a"/><path d="M525 41 h6 v8 h-6 z" fill="#6ab8e8" stroke="#2a7ab8" stroke-width="0.7"/><path d="M529 50 l3 -6 l4 6 z" fill="#7ac86a" stroke="#3a8a3a" stroke-width="0.7"/><path d="M600 39 L600 35 L609 35 L609 22.5 L613 22.5 L613 35 L622 35 L622 39 Z" fill="#e6e6e6" stroke="#6aaa50" stroke-width="1"/><path d="M615 24 L620.5 29.5 M621 26 v4 h-4" fill="none" stroke="#222" stroke-width="1.3"/><path d="M631 22 L636.5 27 L642 22 M631 25 L636.5 30 L642 25" fill="none" stroke="#7ab860" stroke-width="1.2"/><path d="M632 31.5 h9" stroke="#999" stroke-width="1.4"/><path d="M631 49 v-3 h4 v-5 h3 v8 z" fill="#e0e0e0" stroke="#6aaa50" stroke-width="0.9"/><path d="M638.5 41 l3 3 v5 h-3" fill="none" stroke="#888" stroke-width="0.8"/><rect x="632" y="57.5" width="9.5" height="10" fill="#e8f4e6" stroke="#6ab050" stroke-width="1"/><path d="M633 59 L640.5 66.5" stroke="#2a7ac0" stroke-width="1.2"/><path d="M707 27 l3 -6 h7 l-3 6 z" fill="#8acc70" stroke="#4a8a3a" stroke-width="0.8"/><path d="M707 30 l3 -6" stroke="#888" stroke-width="1"/><rect x="707" y="39.5" width="10" height="10" fill="#eee" stroke="#ccc" stroke-width="0.8"/><path d="M710 44.5 h5 M713.5 42.5 l2 2 l-2 2" fill="none" stroke="#aaa" stroke-width="0.9"/><rect x="707" y="57.5" width="10" height="10" fill="#e2f0dc" stroke="#5aa048" stroke-width="1"/><path d="M707.5 58 L716.5 67" stroke="#5aa048" stroke-width="1"/><rect x="772.5" y="22.5" width="18.5" height="18.5" fill="#c8e8f8" stroke="#4aa0d8" stroke-width="1.2"/><rect x="823.5" y="23.5" width="20.5" height="17.5" fill="#fff" stroke="#777" stroke-width="1"/><path d="M823.5 27 h20.5 M823.5 31.5 h20.5 M823.5 36 h20.5 M829 27 v14 M834 27 v14 M839 27 v14" stroke="#aaa" stroke-width="0.7"/><path d="M823.5 26.5 h20.5" stroke="#555" stroke-width="1.2"/></svg>
<svg style="position:absolute;left:0px;top:0px;z-index:4;overflow:visible;" width="868" height="701" viewBox="0 0 868 701"><path d="M9.0 157.7 L11.5 155.2 L17.0 155.2 L17.0 161.7 L14.5 164.2 L9.0 164.2 Z" fill="#8cc8ec" stroke="#3a8ac4" stroke-width="0.90"/><path d="M9.0 157.7 H14.5 V164.2 M14.5 157.7 L17.0 155.2" fill="none" stroke="#3a8ac4" stroke-width="0.70"/><path d="M24.0 170.3 L31.0 170.3 L28.5 176.7 L21.5 176.7 Z" fill="none" stroke="#9c7436" stroke-width="1.10"/><path d="M24.0 184.1 L31.0 184.1 L28.5 190.5 L21.5 190.5 Z" fill="none" stroke="#9c7436" stroke-width="1.10"/><path d="M24.0 197.8 L31.0 197.8 L28.5 204.2 L21.5 204.2 Z" fill="none" stroke="#9c7436" stroke-width="1.10"/><path d="M24.0 210.0 V217.5 H31.0 M24.0 217.5 L21.5 220.0" fill="none" stroke="#9c7436" stroke-width="1.10"/><path d="M21.5 226.0 L31.0 225.0 L29.0 230.0 L27.0 233.5 L24.0 233.5 L24.0 230.0 Z" fill="#7acc60" stroke="#3a8a3a" stroke-width="0.80"/><path d="M11.5 226.5 v5.0 l3.5 -2.5 z" fill="#666"/><path d="M22.0 246.0 V241.0 Q22.0 238.0 25.0 238.0 H27.0 V244.0 L22.0 246.0 Z" fill="#8cd070" stroke="#3a8a3a" stroke-width="0.80"/><path d="M22.0 246.0 L29.0 243.5 L31.0 245.0 L24.0 248.0 Z" fill="#d0d0d0" stroke="#777" stroke-width="0.70"/><path d="M22.5 242.5 L26.5 240.0" stroke="#2a6ab0" stroke-width="0.90"/><path d="M22.0 260.0 V255.0 Q22.0 252.0 25.0 252.0 H27.0 V258.0 L22.0 260.0 Z" fill="#8cd070" stroke="#3a8a3a" stroke-width="0.80"/><path d="M22.0 260.0 L29.0 257.5 L31.0 259.0 L24.0 262.0 Z" fill="#d0d0d0" stroke="#777" stroke-width="0.70"/><path d="M22.5 256.5 L26.5 254.0" stroke="#2a6ab0" stroke-width="0.90"/><path d="M22.0 266.1 L25.0 269.1 V272.1 L22.0 275.1 Z M30.5 266.1 L27.5 269.1 V272.1 L30.5 275.1 Z M26.2 265.6 V275.6" fill="#f4f0fa" stroke="#8a70b8" stroke-width="0.80"/><path d="M11.5 268.1 v5.0 l3.5 -2.5 z" fill="#666"/><path d="M7.8 427.2 L10.0 425.1 L14.6 425.1 L14.6 430.6 L12.5 432.7 L7.8 432.7 Z" fill="#8cc8ec" stroke="#3a8ac4" stroke-width="0.77"/><path d="M7.8 427.2 H12.5 V432.7 M12.5 427.2 L14.6 425.1" fill="none" stroke="#3a8ac4" stroke-width="0.59"/><path d="M20.6 437.5 L26.5 437.5 L24.4 442.9 L18.4 442.9 Z" fill="none" stroke="#9c7436" stroke-width="0.94"/><path d="M20.6 448.9 L26.5 448.9 L24.4 454.3 L18.4 454.3 Z" fill="none" stroke="#9c7436" stroke-width="0.94"/><path d="M20.6 460.3 L26.5 460.3 L24.4 465.7 L18.4 465.7 Z" fill="none" stroke="#9c7436" stroke-width="0.94"/><path d="M20.6 470.4 V476.7 H26.5 M20.6 476.7 L18.4 478.9" fill="none" stroke="#9c7436" stroke-width="0.94"/><path d="M18.4 483.4 L26.5 482.6 L24.8 486.9 L23.1 489.8 L20.6 489.8 L20.6 486.9 Z" fill="#7acc60" stroke="#3a8a3a" stroke-width="0.68"/><path d="M9.4 483.9 v4.2 l3.0 -2.1 z" fill="#666"/><path d="M18.9 500.2 V495.9 Q18.9 493.4 21.4 493.4 H23.1 V498.5 L18.9 500.2 Z" fill="#8cd070" stroke="#3a8a3a" stroke-width="0.68"/><path d="M18.9 500.2 L24.8 498.0 L26.5 499.3 L20.6 501.9 Z" fill="#d0d0d0" stroke="#777" stroke-width="0.59"/><path d="M19.3 497.2 L22.7 495.1" stroke="#2a6ab0" stroke-width="0.77"/><path d="M18.9 511.6 V507.3 Q18.9 504.8 21.4 504.8 H23.1 V509.9 L18.9 511.6 Z" fill="#8cd070" stroke="#3a8a3a" stroke-width="0.68"/><path d="M18.9 511.6 L24.8 509.4 L26.5 510.7 L20.6 513.2 Z" fill="#d0d0d0" stroke="#777" stroke-width="0.59"/><path d="M19.3 508.6 L22.7 506.4" stroke="#2a6ab0" stroke-width="0.77"/><path d="M18.9 516.8 L21.4 519.3 V521.9 L18.9 524.4 Z M26.1 516.8 L23.5 519.3 V521.9 L26.1 524.4 Z M22.5 516.4 V524.9" fill="#f4f0fa" stroke="#8a70b8" stroke-width="0.68"/><path d="M8.5 519.3 h4.2 l-2.1 3.0 z" fill="#555"/><path d="M30.4 534.5 V530.3 Q30.4 527.8 32.9 527.8 H34.6 V532.9 L30.4 534.5 Z" fill="#8cd070" stroke="#3a8a3a" stroke-width="0.68"/><path d="M30.4 534.5 L36.3 532.4 L38.0 533.7 L32.0 536.2 Z" fill="#d0d0d0" stroke="#777" stroke-width="0.59"/><path d="M30.8 531.6 L34.2 529.5" stroke="#2a6ab0" stroke-width="0.77"/><path d="M30.4 546.1 V541.9 Q30.4 539.4 32.9 539.4 H34.6 V544.5 L30.4 546.1 Z" fill="#8cd070" stroke="#3a8a3a" stroke-width="0.68"/><path d="M30.4 546.1 L36.3 544.0 L38.0 545.3 L32.0 547.9 Z" fill="#d0d0d0" stroke="#777" stroke-width="0.59"/><path d="M30.8 543.2 L34.2 541.1" stroke="#2a6ab0" stroke-width="0.77"/><path d="M20.6 552.3 L26.5 552.3 L24.4 557.7 L18.4 557.7 Z" fill="none" stroke="#9c7436" stroke-width="0.94"/><path d="M19.7 570.2 L23.9 562.6" stroke="#9c7436" stroke-width="0.94" stroke-dasharray="2 1.2"/><rect x="18.4" y="574.2" width="6.8" height="7.6" fill="#fff" stroke="#9a90c0" stroke-width="0.59"/><rect x="20.1" y="575.9" width="1.1" height="1.1" fill="#5a4a90"/><rect x="20.1" y="578.9" width="1.1" height="1.1" fill="#5a4a90"/><rect x="22.8" y="575.9" width="1.1" height="1.1" fill="#5a4a90"/><rect x="22.8" y="578.9" width="1.1" height="1.1" fill="#5a4a90"/><path d="M9.4 575.9 v4.2 l3.0 -2.1 z" fill="#666"/><path d="M18.9 585.8 L21.4 588.3 V590.9 L18.9 593.4 Z M26.1 585.8 L23.5 588.3 V590.9 L26.1 593.4 Z M22.5 585.4 V593.9" fill="#f4f0fa" stroke="#8a70b8" stroke-width="0.68"/><path d="M8.5 588.3 h4.2 l-2.1 3.0 z" fill="#555"/><rect x="29.9" y="597.2" width="6.8" height="7.6" fill="#fff" stroke="#9a90c0" stroke-width="0.59"/><rect x="31.6" y="598.9" width="1.1" height="1.1" fill="#5a4a90"/><rect x="31.6" y="601.9" width="1.1" height="1.1" fill="#5a4a90"/><rect x="34.3" y="598.9" width="1.1" height="1.1" fill="#5a4a90"/><rect x="34.3" y="601.9" width="1.1" height="1.1" fill="#5a4a90"/><path d="M20.4 598.9 v4.2 l3.0 -2.1 z" fill="#666"/><path d="M18.4 616.0 V613.9 H21.4 V609.2 H23.1 V613.9 H26.1 V616.0 Z" fill="#e4e4e4" stroke="#4a9a40" stroke-width="0.77"/><path d="M23.5 610.1 L25.6 612.2" stroke="#333" stroke-width="0.68"/><path d="M9.4 610.5 v4.2 l3.0 -2.1 z" fill="#666"/><rect x="18.4" y="620.2" width="6.8" height="7.6" fill="#fff" stroke="#9a90c0" stroke-width="0.59"/><rect x="20.1" y="621.9" width="1.1" height="1.1" fill="#5a4a90"/><rect x="20.1" y="624.9" width="1.1" height="1.1" fill="#5a4a90"/><rect x="22.8" y="621.9" width="1.1" height="1.1" fill="#5a4a90"/><rect x="22.8" y="624.9" width="1.1" height="1.1" fill="#5a4a90"/><path d="M9.4 621.9 v4.2 l3.0 -2.1 z" fill="#666"/><path d="M18.9 631.8 L21.4 634.3 V636.9 L18.9 639.4 Z M26.1 631.8 L23.5 634.3 V636.9 L26.1 639.4 Z M22.5 631.4 V639.9" fill="#f4f0fa" stroke="#8a70b8" stroke-width="0.68"/><path d="M8.5 634.3 h4.2 l-2.1 3.0 z" fill="#555"/><rect x="29.9" y="643.2" width="6.8" height="7.6" fill="#fff" stroke="#9a90c0" stroke-width="0.59"/><rect x="31.6" y="644.9" width="1.1" height="1.1" fill="#5a4a90"/><rect x="31.6" y="647.9" width="1.1" height="1.1" fill="#5a4a90"/><rect x="34.3" y="644.9" width="1.1" height="1.1" fill="#5a4a90"/><rect x="34.3" y="647.9" width="1.1" height="1.1" fill="#5a4a90"/><path d="M20.4 644.9 v4.2 l3.0 -2.1 z" fill="#666"/><path d="M18.4 661.8 V659.2 H20.6 V655.0 H22.2 V661.8 Z" fill="#d8ecd0" stroke="#4a9a40" stroke-width="0.77"/><path d="M23.1 655.0 L26.1 658.4 V661.8 H23.1 Z" fill="#eee" stroke="#777" stroke-width="0.59"/><path d="M18.9 672.5 V668.3 Q18.9 665.8 21.4 665.8 H23.1 V670.9 L18.9 672.5 Z" fill="#8cd070" stroke="#3a8a3a" stroke-width="0.68"/><path d="M18.9 672.5 L24.8 670.4 L26.5 671.7 L20.6 674.2 Z" fill="#d0d0d0" stroke="#777" stroke-width="0.59"/><path d="M19.3 669.6 L22.7 667.5" stroke="#2a6ab0" stroke-width="0.77"/><path d="M18.9 677.6 L21.4 680.1 V682.7 L18.9 685.2 Z M26.1 677.6 L23.5 680.1 V682.7 L26.1 685.2 Z M22.5 677.1 V685.6" fill="#f4f0fa" stroke="#8a70b8" stroke-width="0.68"/><path d="M9.4 679.3 v4.2 l3.0 -2.1 z" fill="#666"/><path d="M18.4 696.1 V694.0 H21.4 V689.3 H23.1 V694.0 H26.1 V696.1 Z" fill="#e4e4e4" stroke="#4a9a40" stroke-width="0.77"/><path d="M23.5 690.2 L25.6 692.3" stroke="#333" stroke-width="0.68"/><path d="M9.4 690.6 v4.2 l3.0 -2.1 z" fill="#666"/></svg>
<svg style="position:absolute;left:0px;top:0px;z-index:5;overflow:visible;" width="868" height="701" viewBox="0 0 868 701"><g fill="none" stroke="#555" stroke-width="0.9"><rect x="7.5" y="94.5" width="3" height="3"/><rect x="7.5" y="99" width="3" height="3"/><rect x="7.5" y="103.5" width="3" height="3"/><rect x="12.5" y="99" width="3" height="3"/></g><path d="M74 97 h5 l1 1 h4 v7 h-10 z M77 100 h5 l1 1 h4 v7 h-10 z" fill="#f2dcaa" stroke="#b08a48" stroke-width="0.8"/><path d="M133 97 h4 l1 1.5 h7 v8.5 h-12 z" fill="#f2dcaa" stroke="#b08a48" stroke-width="0.8"/><circle cx="139" cy="102" r="1.2" fill="#2a6ab0"/><path d="M105 116 h8 v2.5 h-8 z" fill="#5a4630"/><path d="M107.5 118 v9 h2.5 v-9" fill="#e8b050" stroke="#8a6a30" stroke-width="0.6"/><path d="M112 115 v12 h2 v-12" fill="#d4a048" stroke="#8a6a30" stroke-width="0.6"/><rect x="134.5" y="114.5" width="11" height="13" fill="#fff" stroke="#888" stroke-width="0.8"/><path d="M137 118 h6 M137 121 h6 M137 124 h6" stroke="#888" stroke-width="0.8"/><g fill="none" stroke="#bbb" stroke-width="0.8"><rect x="165" y="114.5" width="4" height="4"/><rect x="171" y="114.5" width="4" height="4"/><rect x="165" y="120.5" width="4" height="4"/><circle cx="175" cy="124" r="3"/></g><path d="M124 119.5 h5 l-2.5 3 z M153 119.5 h5 l-2.5 3 z M157.5 138.5 h5 l-2.5 3 z" fill="#444"/><path d="M169 140 h8 M173 136 v8" stroke="#555" stroke-width="1.3"/><path d="M142.5 136.5 l5 5 M147.5 136.5 l-5 5" stroke="#999" stroke-width="0.9"/><path d="M8 135 h10 l-4 4.5 v5 l-2 1.5 v-6.5 z" fill="none" stroke="#555" stroke-width="0.9"/><g fill="none" stroke="#555" stroke-width="0.8"><rect x="6.5" y="374.5" width="2.6" height="2.6"/><rect x="6.5" y="378.6" width="2.6" height="2.6"/><rect x="6.5" y="382.6" width="2.6" height="2.6"/><rect x="11" y="378.6" width="2.6" height="2.6"/></g><path d="M62 376 h4.5 l1 1 h3.5 v6 h-9 z M64.5 379 h4.5 l1 1 h3.5 v6 h-9 z" fill="#f2dcaa" stroke="#b08a48" stroke-width="0.8"/><path d="M111 376.5 h3.5 l1 1.3 h5.5 v7.5 h-10 z" fill="#f2dcaa" stroke="#b08a48" stroke-width="0.8"/><circle cx="116" cy="381" r="1.1" fill="#2a6ab0"/><path d="M87 392 h7 v2.2 h-7 z" fill="#5a4630"/><path d="M89.3 394 v8 h2.2 v-8" fill="#e8b050" stroke="#8a6a30" stroke-width="0.6"/><path d="M93.5 391 v11 h1.8 v-11" fill="#d4a048" stroke="#8a6a30" stroke-width="0.6"/><path d="M102 395.5 h4.5 l-2.25 2.6 z" fill="#444"/><rect x="112.5" y="391.5" width="9" height="11" fill="#fff" stroke="#888" stroke-width="0.8"/><path d="M114.5 395 h5 M114.5 397.5 h5 M114.5 400 h5" stroke="#888" stroke-width="0.7"/><path d="M7 409 h9 l-3.5 4 v4.5 l-2 1.2 v-5.7 z" fill="none" stroke="#555" stroke-width="0.9"/></svg>
<svg style="position:absolute;left:0px;top:0px;z-index:7;overflow:visible;" width="868" height="701" viewBox="0 0 868 701"><rect x="812.1" y="98.9" width="16.0" height="15.0" fill="#dcdfe2" stroke="#c0c4c8" stroke-width="0.8"/><g transform="translate(655.2,106.4) scale(1.0)"><rect x="-5.5" y="-5.5" width="10" height="10" fill="#f0f4f8" stroke="#8a9aaa" stroke-width="0.9"/><circle cx="-0.5" cy="-0.5" r="3" fill="#fff" stroke="#4a6a8a" stroke-width="1"/><path d="M1.5 1.5 L5 5" stroke="#4a6a8a" stroke-width="1.4"/></g><g transform="translate(673.5,106.4) scale(1.0)"><circle cx="-1" cy="-1" r="4" fill="#d8ecf8" stroke="#2a6aa0" stroke-width="1.1"/><path d="M2 2 L5.5 5.5" stroke="#555" stroke-width="1.8"/><path d="M-3 -1 h4 M-1 -3 v4" stroke="#1a4a80" stroke-width="1.1"/></g><g transform="translate(691.8,106.4) scale(1.0)"><circle cx="-1" cy="-1" r="4" fill="#d8ecf8" stroke="#2a6aa0" stroke-width="1.1"/><path d="M2 2 L5.5 5.5" stroke="#555" stroke-width="1.8"/><path d="M-3 -1 h4" stroke="#1a4a80" stroke-width="1.1"/></g><g transform="translate(710.2,106.4) scale(1.0)"><rect x="-5.5" y="-5.5" width="11" height="11" fill="#fff" stroke="#555" stroke-width="0.9"/><path d="M-5 5 L5 -5 L5 5 Z" fill="#2a8ad0"/></g><g transform="translate(728.5,106.4) scale(1.0)"><path d="M-6 -3 l3 -3 h8 v8 l-3 3 h-8 z" fill="#eaf4fb" stroke="#2a6ab0" stroke-width="1"/><path d="M-6 -3 h8 v8 M2 -3 l3 -3" fill="none" stroke="#2a6ab0" stroke-width="1"/><path d="M5 5 l1.5 1.5" stroke="#333"/></g><g transform="translate(746.8,106.4) scale(1.0)"><rect x="-6" y="-5" width="9" height="9" fill="#eaf4fb" stroke="#8ab0d0" stroke-width="0.9"/><rect x="-1" y="-1" width="6" height="6" fill="#ddd" stroke="#888" stroke-width="0.8"/></g><g transform="translate(765.1,106.4) scale(1.0)"><rect x="-5" y="-6" width="8" height="11" fill="#fff" stroke="#777" stroke-width="0.8"/><path d="M-3.5 -3 h5 M-3.5 -1 h5" stroke="#999" stroke-width="0.8"/><rect x="-1" y="0" width="7" height="5" rx="1" fill="#333"/><circle cx="2.5" cy="2.5" r="1.3" fill="#ccc"/></g><g transform="translate(783.4,106.4) scale(1.0)"><path d="M-6 -2 l4 -3 h8 l-1 8 l-4 3 h-7 z" fill="#8ac4e8" stroke="#3a80b8" stroke-width="0.9"/><path d="M-6 -2 h8 v8 M2 -2 l4 -3" fill="none" stroke="#3a80b8" stroke-width="0.8"/></g><g transform="translate(801.8,106.4) scale(1.0)"><path d="M-5 -5 l3 3 M-2 -5 l-3 3 M-1 1 l2 2 M3 -1 l2 2 M-3 4 l1 1 M4 4 l1.5 1.5" stroke="#c08030" stroke-width="1.3"/><path d="M-4 4 L1 -2" stroke="#c08030" stroke-width="1" stroke-dasharray="1.2 1"/></g><g transform="translate(820.1,106.4) scale(1.0)"><path d="M-4 4 L0 -1 L5 2 M0 -1 L-1 -5" stroke="#555" stroke-width="1"/><circle cx="-4" cy="4" r="1.8" fill="#2a9ad0"/><circle cx="5" cy="2" r="1.8" fill="#e04040"/><circle cx="-1" cy="-5" r="1.6" fill="#40b040"/></g><g transform="translate(838.4,106.4) scale(1.0)"><rect x="-6" y="-6" width="8" height="5" fill="#fff" stroke="#666" stroke-width="0.8"/><path d="M2 -3.5 h3 v6" fill="none" stroke="#666" stroke-width="0.8"/><ellipse cx="0" cy="3.5" rx="3.5" ry="2" fill="#333"/><path d="M5 5 l1.5 1.5" stroke="#333"/></g><g transform="translate(856.7,106.4) scale(1.0)"><rect x="-5" y="-6" width="10" height="7" fill="#e8f4e8" stroke="#5a9a5a" stroke-width="0.8" stroke-dasharray="1.5 1"/><circle cx="-2.5" cy="3.5" r="2.2" fill="none" stroke="#444" stroke-width="1"/><circle cx="2.5" cy="3.5" r="2.2" fill="none" stroke="#444" stroke-width="1"/></g><g transform="translate(546.0,384.5) scale(0.82)"><rect x="-5.5" y="-5.5" width="10" height="10" fill="#f0f4f8" stroke="#8a9aaa" stroke-width="0.9"/><circle cx="-0.5" cy="-0.5" r="3" fill="#fff" stroke="#4a6a8a" stroke-width="1"/><path d="M1.5 1.5 L5 5" stroke="#4a6a8a" stroke-width="1.4"/></g><g transform="translate(561.1,384.5) scale(0.82)"><circle cx="-1" cy="-1" r="4" fill="#d8ecf8" stroke="#2a6aa0" stroke-width="1.1"/><path d="M2 2 L5.5 5.5" stroke="#555" stroke-width="1.8"/><path d="M-3 -1 h4 M-1 -3 v4" stroke="#1a4a80" stroke-width="1.1"/></g><g transform="translate(576.2,384.5) scale(0.82)"><circle cx="-1" cy="-1" r="4" fill="#d8ecf8" stroke="#2a6aa0" stroke-width="1.1"/><path d="M2 2 L5.5 5.5" stroke="#555" stroke-width="1.8"/><path d="M-3 -1 h4" stroke="#1a4a80" stroke-width="1.1"/></g><g transform="translate(591.3,384.5) scale(0.82)"><rect x="-5.5" y="-5.5" width="11" height="11" fill="#fff" stroke="#555" stroke-width="0.9"/><path d="M-5 5 L5 -5 L5 5 Z" fill="#2a8ad0"/></g><g transform="translate(606.4,384.5) scale(0.82)"><path d="M-6 -3 l3 -3 h8 v8 l-3 3 h-8 z" fill="#eaf4fb" stroke="#2a6ab0" stroke-width="1"/><path d="M-6 -3 h8 v8 M2 -3 l3 -3" fill="none" stroke="#2a6ab0" stroke-width="1"/><path d="M5 5 l1.5 1.5" stroke="#333"/></g><g transform="translate(621.5,384.5) scale(0.82)"><rect x="-6" y="-5" width="9" height="9" fill="#eaf4fb" stroke="#8ab0d0" stroke-width="0.9"/><rect x="-1" y="-1" width="6" height="6" fill="#ddd" stroke="#888" stroke-width="0.8"/></g><g transform="translate(636.6,384.5) scale(0.82)"><rect x="-5" y="-6" width="8" height="11" fill="#fff" stroke="#777" stroke-width="0.8"/><path d="M-3.5 -3 h5 M-3.5 -1 h5" stroke="#999" stroke-width="0.8"/><rect x="-1" y="0" width="7" height="5" rx="1" fill="#333"/><circle cx="2.5" cy="2.5" r="1.3" fill="#ccc"/></g><g transform="translate(651.7,384.5) scale(0.82)"><path d="M-6 -2 l4 -3 h8 l-1 8 l-4 3 h-7 z" fill="#8ac4e8" stroke="#3a80b8" stroke-width="0.9"/><path d="M-6 -2 h8 v8 M2 -2 l4 -3" fill="none" stroke="#3a80b8" stroke-width="0.8"/></g><g transform="translate(666.8,384.5) scale(0.82)"><path d="M-5 -5 l3 3 M-2 -5 l-3 3 M-1 1 l2 2 M3 -1 l2 2 M-3 4 l1 1 M4 4 l1.5 1.5" stroke="#c08030" stroke-width="1.3"/><path d="M-4 4 L1 -2" stroke="#c08030" stroke-width="1" stroke-dasharray="1.2 1"/></g><g transform="translate(681.9,384.5) scale(0.82)"><path d="M-4 4 L0 -1 L5 2 M0 -1 L-1 -5" stroke="#555" stroke-width="1"/><circle cx="-4" cy="4" r="1.8" fill="#2a9ad0"/><circle cx="5" cy="2" r="1.8" fill="#e04040"/><circle cx="-1" cy="-5" r="1.6" fill="#40b040"/></g><g transform="translate(697.0,384.5) scale(0.82)"><rect x="-6" y="-6" width="8" height="5" fill="#fff" stroke="#666" stroke-width="0.8"/><path d="M2 -3.5 h3 v6" fill="none" stroke="#666" stroke-width="0.8"/><ellipse cx="0" cy="3.5" rx="3.5" ry="2" fill="#333"/><path d="M5 5 l1.5 1.5" stroke="#333"/></g><g transform="translate(712.1,384.5) scale(0.82)"><rect x="-5" y="-6" width="10" height="7" fill="#e8f4e8" stroke="#5a9a5a" stroke-width="0.8" stroke-dasharray="1.5 1"/><circle cx="-2.5" cy="3.5" r="2.2" fill="none" stroke="#444" stroke-width="1"/><circle cx="2.5" cy="3.5" r="2.2" fill="none" stroke="#444" stroke-width="1"/></g></svg>
<svg style="position:absolute;left:0px;top:0px;z-index:5;overflow:visible;" width="868" height="701" viewBox="0 0 868 701"><path d="M6 347 V339 H11.5 V333.5 H14.5 V344 H23.5 V347 Z" fill="#e6e6e6" stroke="#5aaa48" stroke-width="1"/><path d="M16 344 h7 v3 h-7" fill="#eee" stroke="#aaa" stroke-width="0.7"/><path d="M17 341 C17 336 19 334 22 334.5" fill="none" stroke="#222" stroke-width="1.2"/><path d="M19.5 332.5 L23 334.5 L20 337" fill="none" stroke="#222" stroke-width="1.1"/><path d="M41 333.5 L41 342 L43.2 340 L45 344 L46.3 343.4 L44.6 339.6 L47.5 339.4 Z" fill="#fff" stroke="#444" stroke-width="0.8"/><path d="M50.5 333 L47.5 338 L50 338 L47.5 343" fill="none" stroke="#333" stroke-width="1"/><path d="M59.5 333 L59.5 343 L62 340.8 L64 345 L65.5 344.3 L63.6 340.2 L66.8 340 Z" fill="#fff" stroke="#444" stroke-width="0.9"/><path d="M80 333 h3 v7 h-3 z" fill="#eee" stroke="#666" stroke-width="0.7"/><path d="M78 342 L82 338 L89 338 L85 342 Z" fill="#6cc050" stroke="#3a8a3a" stroke-width="0.7"/><path d="M78 344 l2 -2 M81 344.5 l2 -2 M84 344.5 l2 -2" stroke="#2a8ad0" stroke-width="0.9"/><path d="M170 334 L180 344 M170 334 v3 M170 334 h3 M180 344 v-3 M180 344 h-3" fill="none" stroke="#9aa0a6" stroke-width="0.9"/><circle cx="298.8" cy="339.8" r="3" fill="none" stroke="#333" stroke-width="1.1"/><path d="M296.7 337.7 L300.9 341.9" stroke="#333" stroke-width="1.1"/><path d="M310 337 l3 -3 h6 v8 l-3 3 h-6 z" fill="none" stroke="#888" stroke-width="0.8"/><path d="M310 337 h6 v8 M316 337 l3 -3" fill="none" stroke="#888" stroke-width="0.7"/><path d="M326.5 338 l2.5 -2 h4 v5 l-2.5 2 h-4 z" fill="#8ac8ee" stroke="#2a7ab8" stroke-width="0.7"/><path d="M332 337 l4 -1 l-1 5 l-3 1 z" fill="#3a90d0"/><circle cx="347.5" cy="342" r="3" fill="none" stroke="#444" stroke-width="0.9"/><circle cx="355.5" cy="342" r="3" fill="none" stroke="#444" stroke-width="0.9"/><path d="M350.5 342 h2 M344.5 342 l2 -4" stroke="#444" stroke-width="0.9"/><path d="M384 335.6 L388.6 341 L399.4 330.6" fill="none" stroke="#36a02e" stroke-width="3.2"/><path d="M411 333 L419 341 M419 333 L411 341" stroke="#222" stroke-width="2"/></svg>
<svg style="position:absolute;left:0px;top:0px;z-index:6;overflow:visible;" width="868" height="701" viewBox="0 0 868 701"><path d="M205.4 544 L205.4 615" stroke="#34186e" stroke-width="0.9"/><path d="M203 577 L214 575" stroke="#34186e" stroke-width="1.3"/><path d="M212 570.5 L220.5 574.5 L213 579 Z" fill="#34186e"/><g transform="translate(212.5,595.5) rotate(90)"><text x="0" y="4" font-size="12.5" text-anchor="middle" fill="#34186e" stroke="#34186e" font-family="Liberation Sans" stroke-width="0.35">90.00°</text></g><path d="M216.5 557.5 L208.5 566.5 L217 569" stroke="#34186e" stroke-width="1.3" fill="none"/><rect x="270.5" y="556" width="9" height="9" fill="none" stroke="#34186e" stroke-width="1.4"/><path d="M285.5 569 V554" stroke="#34186e" stroke-width="1.4"/><path d="M282.5 556 l3 -5 l3 5 Z" fill="#34186e"/><path d="M248 572 L300 563" stroke="#34186e" stroke-width="0.9"/><text x="289" y="563" font-size="12" fill="#34186e" stroke="#34186e" font-family="Liberation Sans" stroke-width="0.35" transform="rotate(-9 289 563)">45</text><rect x="370" y="543" width="7" height="8" fill="none" stroke="#34186e" stroke-width="1.3"/><path d="M384.3 555 V540" stroke="#34186e" stroke-width="1.4"/><path d="M381.5 542 l2.8 -4.5 l2.8 4.5 Z" fill="#34186e"/><path d="M368 553 L432 542" stroke="#34186e" stroke-width="0.8"/><text x="387" y="548" font-size="12" fill="#34186e" stroke="#34186e" font-family="Liberation Sans" stroke-width="0.35" transform="rotate(-9 387 548)">45.00°</text><text x="521" y="525.5" font-size="9.2" fill="#6a4a3a" fill-opacity="0.75" font-family="Liberation Sans" transform="rotate(-5 521 525.5)">PRT_CSYS_DEF</text><text x="520" y="551" font-size="8" fill="#3a2a2a" font-family="Liberation Sans">z</text><text x="0" y="0" font-size="13.5" fill="#34186e" stroke="#34186e" font-family="Liberation Sans" stroke-width="0.35" transform="translate(834,477) rotate(172)">5.00°</text><text x="0" y="0" font-size="11" fill="#3a2a6a" fill-opacity="0.45" font-family="Liberation Sans" transform="translate(728,497) rotate(171)">5.00°</text><g transform="translate(843,491) rotate(90)"><text x="0" y="4.5" font-size="13" text-anchor="middle" fill="#34186e" stroke="#34186e" font-family="Liberation Sans" stroke-width="0.35">90.00°</text></g><path d="M835.7 440 L835.7 510" stroke="#34186e" stroke-width="0.9"/><path d="M846 453 L838 462.5 L847 467" stroke="#34186e" stroke-width="1.4" fill="none"/><path d="M832 471.4 L846 469.5" stroke="#34186e" stroke-width="1.4"/><path d="M845 465.5 L853 469 L846 473 Z" fill="#34186e"/><rect x="851.5" y="474" width="9.5" height="9" fill="none" stroke="#34186e" stroke-width="1.5" transform="rotate(-8 856 478)"/><rect x="206.8" y="223.8" width="9" height="8.2" fill="none" stroke="#34186e" stroke-width="1.6"/><path d="M205 221 H219" stroke="#9a88c0" stroke-width="1"/><path d="M221 212 L216 217 L221 219 L219 224 L221 228 L219.5 236 M221 240 q-3 2 0 4 q-3 2 0 4 q-3 2 0 4 q-3 2 0 4" fill="none" stroke="#34186e" stroke-width="1.6"/><path d="M627 212 v5 M629.5 212 l2 5 M634 213 v4 M645 212 v5 M649 212 l2 5 M651.5 212 v5" stroke="#34186e" stroke-width="1.2"/></svg>
<svg style="position:absolute;left:0px;top:0px;z-index:4;overflow:visible;" width="868" height="701" viewBox="0 0 868 701"><path d="M118 409.5 l5 5 M123 409.5 l-5 5" stroke="#999" stroke-width="0.9"/></svg>
<svg style="position:absolute;left:0px;top:0px;z-index:4;overflow:visible;" width="868" height="701" viewBox="0 0 868 701"><path d="M202 161 v30" stroke="none"/></svg></body></html>
